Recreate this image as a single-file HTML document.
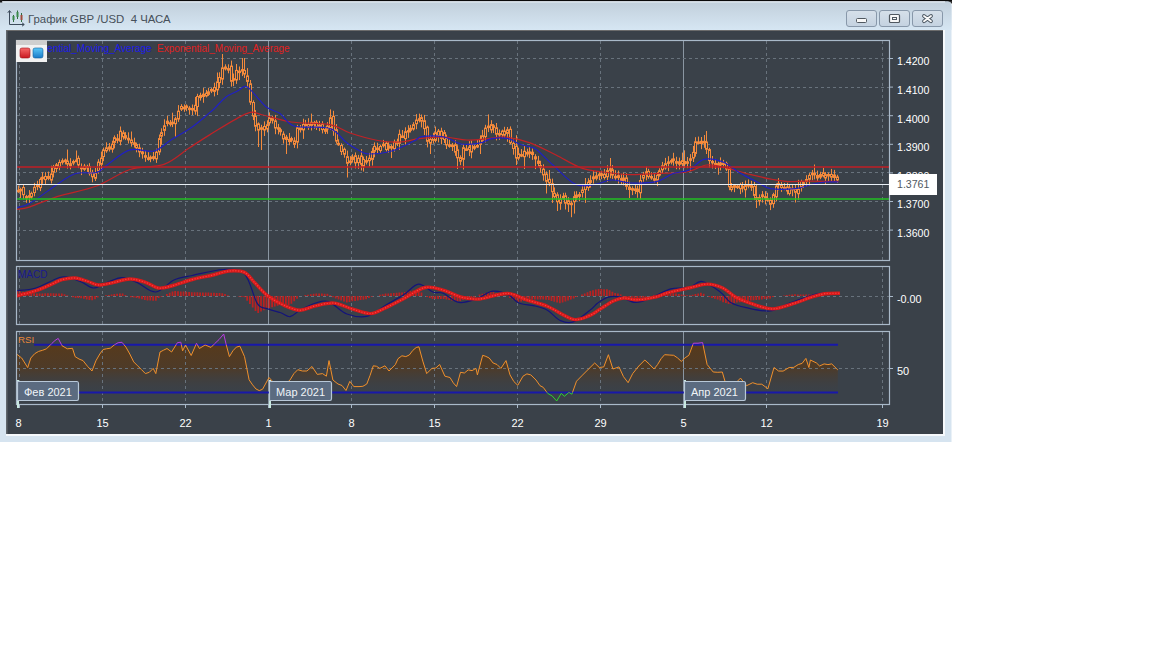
<!DOCTYPE html>
<html><head><meta charset="utf-8"><style>
html,body{margin:0;padding:0;background:#fff;}
body{width:1152px;height:648px;position:relative;overflow:hidden;font-family:"Liberation Sans", sans-serif;}
</style></head><body>
<svg width="1152" height="648" viewBox="0 0 1152 648" style="position:absolute;left:0;top:0;font-family:'Liberation Sans', sans-serif">
<defs>
<linearGradient id="tb" x1="0" y1="0" x2="0" y2="1"><stop offset="0" stop-color="#c0ceda"/><stop offset="1" stop-color="#d6e6f3"/></linearGradient>
<linearGradient id="btn" x1="0" y1="0" x2="0" y2="1"><stop offset="0" stop-color="#d6e0ea"/><stop offset="1" stop-color="#c4d2e0"/></linearGradient>
</defs>
<!-- window frame -->
<path d="M0,0 H946 Q951.5,0 951.5,6 V442 H0 Z" fill="#d6e4f0"/>
<path d="M0,0 H946 Q951.5,0 951.5,6 V30 H0 Z" fill="url(#tb)"/>
<rect x="0" y="0" width="952" height="1.2" fill="#0a0a0a"/>
<path d="M948,1 L952,1 L952,4 Q951,2 948,1 Z" fill="#2a2a2a"/>
<rect x="0" y="0" width="2.5" height="2.5" fill="#1a1a1a"/>
<rect x="2" y="1.4" width="943" height="1" fill="#eef4fa"/>
<rect x="943" y="30" width="2" height="406" fill="#f6f9fc"/>
<rect x="6" y="434" width="939" height="2" fill="#f6f9fc"/>
<rect x="6" y="30" width="937" height="404" fill="#3a4149"/>
<rect x="6" y="30" width="1.5" height="404" fill="#60666c"/>
<rect x="6" y="30" width="937" height="1" fill="#6c6c6c"/>
<!-- title icon -->
<g stroke="#3c4a5a" stroke-width="1" fill="none">
<path d="M9.5,11 V24.5 H24"/>
<path d="M7.8,12.8 L9.5,10.5 L11.2,12.8"/>
<path d="M22,22.8 L24.3,24.5 L22,26.2"/>
</g>
<g stroke="#2e6a3e" stroke-width="1"><path d="M13.5,15 V22 M17.5,10.5 V19 M21.5,13 V22"/></g>
<rect x="12.5" y="16" width="2" height="4" fill="#3a8a4a"/>
<rect x="16.5" y="12" width="2" height="5" fill="#3a8a4a"/>
<rect x="20.5" y="15" width="2" height="5" fill="#a04a3a"/>
<text x="28" y="23" font-size="11.4" fill="#46505a" xml:space="preserve">График GBP /USD  4 ЧАСА</text>
<!-- window buttons -->
<rect x="846.5" y="10.5" width="30" height="16" rx="2.5" fill="url(#btn)" stroke="#8898aa" stroke-width="1"/>
<rect x="879.5" y="10.5" width="30" height="16" rx="2.5" fill="url(#btn)" stroke="#8898aa" stroke-width="1"/>
<rect x="912.5" y="10.5" width="30" height="16" rx="2.5" fill="url(#btn)" stroke="#8898aa" stroke-width="1"/>
<rect x="856.5" y="18.5" width="10" height="4" rx="1" fill="#f8f8f8" stroke="#505860" stroke-width="1"/>
<rect x="889.5" y="14.5" width="10" height="8" rx="1" fill="#f8f8f8" stroke="#505860" stroke-width="1.2"/>
<rect x="892.5" y="17.5" width="4" height="2" fill="none" stroke="#505860" stroke-width="1"/>
<path d="M924,16 L931,21.2 M931,16 L924,21.2" stroke="#4a5560" stroke-width="3.8" stroke-linecap="round"/>
<path d="M924,16 L931,21.2 M931,16 L924,21.2" stroke="#fafafa" stroke-width="1.9" stroke-linecap="round"/>
<line x1="19.5" y1="41" x2="19.5" y2="260" stroke="#68727c" stroke-width="1" stroke-dasharray="3 3"/><line x1="102.5" y1="41" x2="102.5" y2="260" stroke="#68727c" stroke-width="1" stroke-dasharray="3 3"/><line x1="185.5" y1="41" x2="185.5" y2="260" stroke="#68727c" stroke-width="1" stroke-dasharray="3 3"/><line x1="351.5" y1="41" x2="351.5" y2="260" stroke="#68727c" stroke-width="1" stroke-dasharray="3 3"/><line x1="434.5" y1="41" x2="434.5" y2="260" stroke="#68727c" stroke-width="1" stroke-dasharray="3 3"/><line x1="517.5" y1="41" x2="517.5" y2="260" stroke="#68727c" stroke-width="1" stroke-dasharray="3 3"/><line x1="600.5" y1="41" x2="600.5" y2="260" stroke="#68727c" stroke-width="1" stroke-dasharray="3 3"/><line x1="766.5" y1="41" x2="766.5" y2="260" stroke="#68727c" stroke-width="1" stroke-dasharray="3 3"/><line x1="882.5" y1="41" x2="882.5" y2="260" stroke="#68727c" stroke-width="1" stroke-dasharray="3 3"/><line x1="268.5" y1="41" x2="268.5" y2="260" stroke="#8a96a2" stroke-width="1"/><line x1="683.5" y1="41" x2="683.5" y2="260" stroke="#8a96a2" stroke-width="1"/><line x1="17" y1="58.5" x2="889" y2="58.5" stroke="#68727c" stroke-width="1" stroke-dasharray="3 3"/><line x1="17" y1="87.5" x2="889" y2="87.5" stroke="#68727c" stroke-width="1" stroke-dasharray="3 3"/><line x1="17" y1="115.5" x2="889" y2="115.5" stroke="#68727c" stroke-width="1" stroke-dasharray="3 3"/><line x1="17" y1="144.5" x2="889" y2="144.5" stroke="#68727c" stroke-width="1" stroke-dasharray="3 3"/><line x1="17" y1="172.5" x2="889" y2="172.5" stroke="#68727c" stroke-width="1" stroke-dasharray="3 3"/><line x1="17" y1="201.5" x2="889" y2="201.5" stroke="#68727c" stroke-width="1" stroke-dasharray="3 3"/><line x1="17" y1="230.5" x2="889" y2="230.5" stroke="#68727c" stroke-width="1" stroke-dasharray="3 3"/><path d="M18.5,185.5V192.8M20.5,187.7V198.1M23.5,184.9V199.3M26.5,194.9V202.8M29.5,190.1V204.0M31.5,191.6V198.8M34.5,182.9V196.3M37.5,180.8V190.2M40.5,177.4V191.1M42.5,172.3V183.9M45.5,172.1V184.0M48.5,171.6V180.2M51.5,165.7V183.5M53.5,164.9V177.4M56.5,163.0V172.3M59.5,159.6V170.3M62.5,158.4V164.6M65.5,158.6V164.4M67.5,149.5V168.6M70.5,158.2V169.4M73.5,159.7V165.3M76.5,150.5V162.3M78.5,155.6V168.1M81.5,163.5V175.1M84.5,163.9V170.9M87.5,164.7V171.9M89.5,163.2V175.6M92.5,169.8V182.3M95.5,168.0V181.0M98.5,159.2V173.7M101.5,151.6V170.6M103.5,147.6V161.2M106.5,142.3V152.8M109.5,143.0V151.5M112.5,140.7V152.7M114.5,135.4V148.4M117.5,134.1V143.3M120.5,126.5V145.3M123.5,130.3V139.6M125.5,132.1V140.1M128.5,132.3V143.5M131.5,131.5V146.6M134.5,137.7V147.5M136.5,142.6V152.3M139.5,143.7V157.2M142.5,147.8V158.7M145.5,150.7V161.8M148.5,152.2V160.7M150.5,155.4V162.2M153.5,151.9V160.6M156.5,148.7V162.9M159.5,134.5V155.1M161.5,128.3V144.6M164.5,119.3V135.8M167.5,115.8V126.3M170.5,120.0V126.5M172.5,112.7V127.1M175.5,116.8V136.8M178.5,105.1V121.9M181.5,104.2V111.0M184.5,104.4V111.8M186.5,104.4V111.2M189.5,106.1V114.7M192.5,104.5V115.0M195.5,97.0V114.7M197.5,93.8V116.1M200.5,92.7V100.6M203.5,87.9V102.8M206.5,89.9V97.4M208.5,87.8V95.9M211.5,87.9V93.1M214.5,82.7V96.4M217.5,72.5V95.0M219.5,72.3V88.1M222.5,54.0V84.8M225.5,64.3V70.5M228.5,64.3V73.3M231.5,60.6V86.6M233.5,73.5V86.2M236.5,64.0V83.9M239.5,66.5V80.1M242.5,58.0V76.1M244.5,58.0V78.0M247.5,68.1V87.8M250.5,80.0V104.9M253.5,100.3V120.1M255.5,110.1V131.3M258.5,122.4V147.0M261.5,124.8V150.0M264.5,121.4V136.0M267.5,120.3V132.3M269.5,112.4V125.7M272.5,115.7V123.6M275.5,114.9V134.2M278.5,123.9V134.4M280.5,127.7V135.6M283.5,131.3V143.6M286.5,134.9V154.0M289.5,133.0V145.3M291.5,136.7V142.3M294.5,137.3V147.9M297.5,124.9V148.4M300.5,125.0V132.5M303.5,118.7V138.9M305.5,119.9V126.8M308.5,118.2V129.9M311.5,113.6V130.5M314.5,120.9V128.7M316.5,120.2V130.0M319.5,120.9V131.1M322.5,121.2V133.4M325.5,126.8V134.0M327.5,122.1V133.8M330.5,109.4V129.9M333.5,110.8V135.8M336.5,124.1V143.7M338.5,139.3V145.8M341.5,143.3V155.0M344.5,147.5V157.7M347.5,150.6V177.5M350.5,156.2V165.3M352.5,154.2V162.6M355.5,152.4V168.4M358.5,154.9V168.8M361.5,149.2V170.5M363.5,156.6V171.6M366.5,156.0V164.5M369.5,152.9V166.7M372.5,147.7V165.6M374.5,142.4V157.3M377.5,142.7V153.6M380.5,144.6V152.9M383.5,139.9V147.5M386.5,141.3V151.5M388.5,142.2V152.8M391.5,144.5V158.0M394.5,139.6V151.6M397.5,138.7V146.0M399.5,129.6V149.8M402.5,130.0V138.0M405.5,127.3V144.8M408.5,125.2V137.9M410.5,124.9V132.5M413.5,122.2V130.6M416.5,114.1V129.2M419.5,113.6V122.4M421.5,114.5V127.4M424.5,114.9V135.1M427.5,125.6V147.4M430.5,135.6V154.0M433.5,132.8V143.6M435.5,126.5V142.4M438.5,129.0V142.4M441.5,127.7V144.3M444.5,130.0V143.0M446.5,134.6V149.0M449.5,138.8V147.7M452.5,143.0V151.0M455.5,140.3V155.8M457.5,145.2V169.0M460.5,155.3V165.2M463.5,144.0V169.5M466.5,144.8V150.8M469.5,141.2V156.1M471.5,140.5V158.3M474.5,144.8V150.2M477.5,139.9V148.0M480.5,135.3V154.0M482.5,129.9V142.6M485.5,124.8V142.4M488.5,114.4V132.1M491.5,120.2V133.2M493.5,124.1V133.0M496.5,123.0V140.4M499.5,129.5V139.8M502.5,129.6V138.0M504.5,126.8V137.6M507.5,127.0V141.8M510.5,126.4V144.3M513.5,139.7V154.7M516.5,135.2V165.0M518.5,147.6V160.4M521.5,149.0V157.1M524.5,145.9V169.0M527.5,148.7V156.6M529.5,146.7V158.1M532.5,148.5V159.9M535.5,154.2V169.1M538.5,155.9V166.6M540.5,160.8V172.5M543.5,164.3V180.7M546.5,171.4V193.5M549.5,170.0V186.2M552.5,178.6V202.9M554.5,187.4V198.6M557.5,192.3V211.0M560.5,194.3V209.8M563.5,192.8V199.7M565.5,192.7V209.5M568.5,197.2V212.0M571.5,200.6V217.2M574.5,191.4V213.6M576.5,191.2V200.6M579.5,192.0V201.3M582.5,184.5V197.5M585.5,178.0V202.9M588.5,178.2V190.9M590.5,175.3V187.6M593.5,171.2V183.6M596.5,171.4V180.4M599.5,171.2V180.1M601.5,170.7V179.2M604.5,169.1V179.5M607.5,165.3V181.9M610.5,158.0V178.2M612.5,165.1V178.9M615.5,170.2V180.7M618.5,170.6V183.6M621.5,173.8V184.5M623.5,172.7V185.4M626.5,173.3V189.8M629.5,181.7V198.0M632.5,186.3V195.1M635.5,184.8V194.1M637.5,185.6V197.8M640.5,174.1V199.3M643.5,171.9V181.7M646.5,166.7V180.3M648.5,168.8V178.8M651.5,172.2V179.8M654.5,173.1V182.6M657.5,172.1V186.1M659.5,168.3V176.6M662.5,161.9V173.4M665.5,157.9V169.7M668.5,156.2V171.1M671.5,158.6V164.4M673.5,152.8V165.7M676.5,156.8V169.2M679.5,157.6V169.4M682.5,152.6V166.1M684.5,150.3V168.1M687.5,157.0V168.1M690.5,154.1V171.0M693.5,146.0V162.0M695.5,137.2V156.7M698.5,136.6V144.5M701.5,137.0V149.2M704.5,135.0V147.8M706.5,131.0V154.0M709.5,147.8V167.6M712.5,156.0V168.5M715.5,158.9V169.0M718.5,161.7V174.7M720.5,157.4V170.4M723.5,159.9V168.2M726.5,161.7V171.0M729.5,167.1V190.2M731.5,183.0V191.7M734.5,184.1V192.2M737.5,184.0V189.0M740.5,182.8V194.1M742.5,182.0V192.4M745.5,180.5V197.5M748.5,179.5V188.3M751.5,180.9V190.9M754.5,181.8V200.1M756.5,184.4V208.0M759.5,194.4V205.6M762.5,191.1V202.6M765.5,191.2V204.4M767.5,192.8V201.6M770.5,197.4V210.1M773.5,192.8V207.8M776.5,183.4V201.4M778.5,178.1V190.3M781.5,182.1V191.9M784.5,183.0V190.2M787.5,182.7V194.5M789.5,184.4V195.5M792.5,185.0V196.3M795.5,184.6V202.5M798.5,179.8V200.0M801.5,179.7V191.6M803.5,180.9V188.0M806.5,175.2V186.2M809.5,173.1V185.6M812.5,170.0V180.2M814.5,164.5V179.4M817.5,170.6V180.9M820.5,171.8V179.2M823.5,167.9V177.4M825.5,172.1V184.2M828.5,172.5V181.5M831.5,168.9V181.1M834.5,169.9V181.7M837.5,174.8V182.8" stroke="#f48a3c" stroke-width="1" fill="none"/><rect x="17.5" y="190.3" width="2" height="1.5" fill="#f48a3c" stroke="#f48a3c" stroke-width="1"/><rect x="19.5" y="189.3" width="2" height="1.6" fill="#f48a3c" stroke="#f48a3c" stroke-width="1"/><rect x="22.5" y="187.5" width="2" height="7.2" fill="#3a4149" stroke="#f48a3c" stroke-width="1"/><rect x="25.5" y="196.6" width="2" height="1.5" fill="#f48a3c" stroke="#f48a3c" stroke-width="1"/><rect x="28.5" y="195.7" width="2" height="1.5" fill="#f48a3c" stroke="#f48a3c" stroke-width="1"/><rect x="30.5" y="193.4" width="2" height="3.6" fill="#3a4149" stroke="#f48a3c" stroke-width="1"/><rect x="33.5" y="187.3" width="2" height="5.2" fill="#3a4149" stroke="#f48a3c" stroke-width="1"/><rect x="36.5" y="185.1" width="2" height="1.5" fill="#f48a3c" stroke="#f48a3c" stroke-width="1"/><rect x="39.5" y="179.5" width="2" height="8.1" fill="#3a4149" stroke="#f48a3c" stroke-width="1"/><rect x="41.5" y="177.2" width="2" height="1.5" fill="#f48a3c" stroke="#f48a3c" stroke-width="1"/><rect x="44.5" y="176.5" width="2" height="3.1" fill="#3a4149" stroke="#f48a3c" stroke-width="1"/><rect x="47.5" y="176.4" width="2" height="2.0" fill="#f48a3c" stroke="#f48a3c" stroke-width="1"/><rect x="50.5" y="174.0" width="2" height="6.1" fill="#3a4149" stroke="#f48a3c" stroke-width="1"/><rect x="52.5" y="166.7" width="2" height="5.3" fill="#3a4149" stroke="#f48a3c" stroke-width="1"/><rect x="55.5" y="164.9" width="2" height="3.6" fill="#3a4149" stroke="#f48a3c" stroke-width="1"/><rect x="58.5" y="162.5" width="2" height="4.3" fill="#3a4149" stroke="#f48a3c" stroke-width="1"/><rect x="61.5" y="160.8" width="2" height="1.5" fill="#f48a3c" stroke="#f48a3c" stroke-width="1"/><rect x="64.5" y="160.1" width="2" height="1.5" fill="#f48a3c" stroke="#f48a3c" stroke-width="1"/><rect x="66.5" y="161.1" width="2" height="3.0" fill="#3a4149" stroke="#f48a3c" stroke-width="1"/><rect x="69.5" y="163.7" width="2" height="2.2" fill="#f48a3c" stroke="#f48a3c" stroke-width="1"/><rect x="72.5" y="161.5" width="2" height="1.5" fill="#f48a3c" stroke="#f48a3c" stroke-width="1"/><rect x="75.5" y="160.1" width="2" height="1.5" fill="#f48a3c" stroke="#f48a3c" stroke-width="1"/><rect x="77.5" y="158.4" width="2" height="6.5" fill="#3a4149" stroke="#f48a3c" stroke-width="1"/><rect x="80.5" y="167.3" width="2" height="1.5" fill="#f48a3c" stroke="#f48a3c" stroke-width="1"/><rect x="83.5" y="166.2" width="2" height="3.1" fill="#3a4149" stroke="#f48a3c" stroke-width="1"/><rect x="86.5" y="166.4" width="2" height="1.5" fill="#f48a3c" stroke="#f48a3c" stroke-width="1"/><rect x="88.5" y="166.5" width="2" height="6.8" fill="#3a4149" stroke="#f48a3c" stroke-width="1"/><rect x="91.5" y="172.5" width="2" height="4.3" fill="#3a4149" stroke="#f48a3c" stroke-width="1"/><rect x="94.5" y="173.2" width="2" height="5.1" fill="#3a4149" stroke="#f48a3c" stroke-width="1"/><rect x="97.5" y="162.1" width="2" height="8.8" fill="#3a4149" stroke="#f48a3c" stroke-width="1"/><rect x="100.5" y="158.1" width="2" height="6.2" fill="#3a4149" stroke="#f48a3c" stroke-width="1"/><rect x="102.5" y="150.1" width="2" height="6.4" fill="#3a4149" stroke="#f48a3c" stroke-width="1"/><rect x="105.5" y="147.8" width="2" height="3.0" fill="#3a4149" stroke="#f48a3c" stroke-width="1"/><rect x="108.5" y="146.9" width="2" height="2.2" fill="#f48a3c" stroke="#f48a3c" stroke-width="1"/><rect x="111.5" y="144.2" width="2" height="5.0" fill="#3a4149" stroke="#f48a3c" stroke-width="1"/><rect x="113.5" y="137.7" width="2" height="4.7" fill="#3a4149" stroke="#f48a3c" stroke-width="1"/><rect x="116.5" y="138.8" width="2" height="1.5" fill="#f48a3c" stroke="#f48a3c" stroke-width="1"/><rect x="119.5" y="131.2" width="2" height="10.0" fill="#3a4149" stroke="#f48a3c" stroke-width="1"/><rect x="122.5" y="132.8" width="2" height="4.0" fill="#3a4149" stroke="#f48a3c" stroke-width="1"/><rect x="124.5" y="135.7" width="2" height="2.3" fill="#f48a3c" stroke="#f48a3c" stroke-width="1"/><rect x="127.5" y="138.3" width="2" height="1.6" fill="#f48a3c" stroke="#f48a3c" stroke-width="1"/><rect x="130.5" y="140.0" width="2" height="2.9" fill="#3a4149" stroke="#f48a3c" stroke-width="1"/><rect x="133.5" y="142.8" width="2" height="1.5" fill="#f48a3c" stroke="#f48a3c" stroke-width="1"/><rect x="135.5" y="144.6" width="2" height="3.3" fill="#3a4149" stroke="#f48a3c" stroke-width="1"/><rect x="138.5" y="148.0" width="2" height="3.9" fill="#3a4149" stroke="#f48a3c" stroke-width="1"/><rect x="141.5" y="151.9" width="2" height="1.8" fill="#f48a3c" stroke="#f48a3c" stroke-width="1"/><rect x="144.5" y="155.7" width="2" height="1.5" fill="#f48a3c" stroke="#f48a3c" stroke-width="1"/><rect x="147.5" y="157.9" width="2" height="1.5" fill="#f48a3c" stroke="#f48a3c" stroke-width="1"/><rect x="149.5" y="157.2" width="2" height="1.5" fill="#f48a3c" stroke="#f48a3c" stroke-width="1"/><rect x="152.5" y="156.7" width="2" height="1.7" fill="#f48a3c" stroke="#f48a3c" stroke-width="1"/><rect x="155.5" y="152.2" width="2" height="6.7" fill="#3a4149" stroke="#f48a3c" stroke-width="1"/><rect x="158.5" y="138.6" width="2" height="13.3" fill="#3a4149" stroke="#f48a3c" stroke-width="1"/><rect x="160.5" y="132.6" width="2" height="3.6" fill="#3a4149" stroke="#f48a3c" stroke-width="1"/><rect x="163.5" y="125.8" width="2" height="4.6" fill="#3a4149" stroke="#f48a3c" stroke-width="1"/><rect x="166.5" y="121.2" width="2" height="2.3" fill="#f48a3c" stroke="#f48a3c" stroke-width="1"/><rect x="169.5" y="122.8" width="2" height="1.5" fill="#f48a3c" stroke="#f48a3c" stroke-width="1"/><rect x="171.5" y="122.2" width="2" height="1.5" fill="#f48a3c" stroke="#f48a3c" stroke-width="1"/><rect x="174.5" y="118.8" width="2" height="4.9" fill="#3a4149" stroke="#f48a3c" stroke-width="1"/><rect x="177.5" y="111.2" width="2" height="7.8" fill="#3a4149" stroke="#f48a3c" stroke-width="1"/><rect x="180.5" y="106.5" width="2" height="2.7" fill="#3a4149" stroke="#f48a3c" stroke-width="1"/><rect x="183.5" y="107.3" width="2" height="1.5" fill="#f48a3c" stroke="#f48a3c" stroke-width="1"/><rect x="185.5" y="106.0" width="2" height="1.5" fill="#f48a3c" stroke="#f48a3c" stroke-width="1"/><rect x="188.5" y="108.1" width="2" height="1.5" fill="#f48a3c" stroke="#f48a3c" stroke-width="1"/><rect x="191.5" y="108.5" width="2" height="1.5" fill="#f48a3c" stroke="#f48a3c" stroke-width="1"/><rect x="194.5" y="105.3" width="2" height="5.8" fill="#3a4149" stroke="#f48a3c" stroke-width="1"/><rect x="196.5" y="96.5" width="2" height="10.0" fill="#3a4149" stroke="#f48a3c" stroke-width="1"/><rect x="199.5" y="95.4" width="2" height="2.2" fill="#f48a3c" stroke="#f48a3c" stroke-width="1"/><rect x="202.5" y="94.2" width="2" height="2.3" fill="#f48a3c" stroke="#f48a3c" stroke-width="1"/><rect x="205.5" y="93.2" width="2" height="2.7" fill="#3a4149" stroke="#f48a3c" stroke-width="1"/><rect x="207.5" y="91.8" width="2" height="2.6" fill="#3a4149" stroke="#f48a3c" stroke-width="1"/><rect x="210.5" y="89.5" width="2" height="1.5" fill="#f48a3c" stroke="#f48a3c" stroke-width="1"/><rect x="213.5" y="87.5" width="2" height="3.9" fill="#3a4149" stroke="#f48a3c" stroke-width="1"/><rect x="216.5" y="81.9" width="2" height="8.0" fill="#3a4149" stroke="#f48a3c" stroke-width="1"/><rect x="218.5" y="77.5" width="2" height="5.1" fill="#3a4149" stroke="#f48a3c" stroke-width="1"/><rect x="221.5" y="67.9" width="2" height="11.2" fill="#3a4149" stroke="#f48a3c" stroke-width="1"/><rect x="224.5" y="67.0" width="2" height="1.9" fill="#f48a3c" stroke="#f48a3c" stroke-width="1"/><rect x="227.5" y="68.6" width="2" height="1.5" fill="#f48a3c" stroke="#f48a3c" stroke-width="1"/><rect x="230.5" y="66.1" width="2" height="15.2" fill="#3a4149" stroke="#f48a3c" stroke-width="1"/><rect x="232.5" y="78.7" width="2" height="1.5" fill="#f48a3c" stroke="#f48a3c" stroke-width="1"/><rect x="235.5" y="70.4" width="2" height="9.6" fill="#3a4149" stroke="#f48a3c" stroke-width="1"/><rect x="238.5" y="71.1" width="2" height="1.5" fill="#f48a3c" stroke="#f48a3c" stroke-width="1"/><rect x="241.5" y="69.6" width="2" height="1.5" fill="#f48a3c" stroke="#f48a3c" stroke-width="1"/><rect x="243.5" y="70.5" width="2" height="3.5" fill="#3a4149" stroke="#f48a3c" stroke-width="1"/><rect x="246.5" y="75.9" width="2" height="5.5" fill="#3a4149" stroke="#f48a3c" stroke-width="1"/><rect x="249.5" y="83.8" width="2" height="18.3" fill="#3a4149" stroke="#f48a3c" stroke-width="1"/><rect x="252.5" y="102.5" width="2" height="13.5" fill="#3a4149" stroke="#f48a3c" stroke-width="1"/><rect x="254.5" y="116.0" width="2" height="10.2" fill="#3a4149" stroke="#f48a3c" stroke-width="1"/><rect x="257.5" y="123.9" width="2" height="6.2" fill="#3a4149" stroke="#f48a3c" stroke-width="1"/><rect x="260.5" y="127.8" width="2" height="1.5" fill="#f48a3c" stroke="#f48a3c" stroke-width="1"/><rect x="263.5" y="126.5" width="2" height="3.5" fill="#3a4149" stroke="#f48a3c" stroke-width="1"/><rect x="266.5" y="124.8" width="2" height="4.2" fill="#3a4149" stroke="#f48a3c" stroke-width="1"/><rect x="268.5" y="118.1" width="2" height="4.7" fill="#3a4149" stroke="#f48a3c" stroke-width="1"/><rect x="271.5" y="118.2" width="2" height="2.1" fill="#f48a3c" stroke="#f48a3c" stroke-width="1"/><rect x="274.5" y="120.9" width="2" height="7.1" fill="#3a4149" stroke="#f48a3c" stroke-width="1"/><rect x="277.5" y="127.7" width="2" height="1.5" fill="#f48a3c" stroke="#f48a3c" stroke-width="1"/><rect x="279.5" y="129.8" width="2" height="1.9" fill="#f48a3c" stroke="#f48a3c" stroke-width="1"/><rect x="282.5" y="134.1" width="2" height="4.8" fill="#3a4149" stroke="#f48a3c" stroke-width="1"/><rect x="285.5" y="137.2" width="2" height="2.3" fill="#f48a3c" stroke="#f48a3c" stroke-width="1"/><rect x="288.5" y="139.4" width="2" height="2.1" fill="#f48a3c" stroke="#f48a3c" stroke-width="1"/><rect x="290.5" y="138.6" width="2" height="1.5" fill="#f48a3c" stroke="#f48a3c" stroke-width="1"/><rect x="293.5" y="140.9" width="2" height="3.4" fill="#3a4149" stroke="#f48a3c" stroke-width="1"/><rect x="296.5" y="127.8" width="2" height="14.3" fill="#3a4149" stroke="#f48a3c" stroke-width="1"/><rect x="299.5" y="127.6" width="2" height="2.1" fill="#f48a3c" stroke="#f48a3c" stroke-width="1"/><rect x="302.5" y="124.5" width="2" height="5.4" fill="#3a4149" stroke="#f48a3c" stroke-width="1"/><rect x="304.5" y="124.3" width="2" height="1.5" fill="#f48a3c" stroke="#f48a3c" stroke-width="1"/><rect x="307.5" y="124.5" width="2" height="2.6" fill="#3a4149" stroke="#f48a3c" stroke-width="1"/><rect x="310.5" y="122.3" width="2" height="3.1" fill="#3a4149" stroke="#f48a3c" stroke-width="1"/><rect x="313.5" y="122.6" width="2" height="1.5" fill="#f48a3c" stroke="#f48a3c" stroke-width="1"/><rect x="315.5" y="122.3" width="2" height="4.9" fill="#3a4149" stroke="#f48a3c" stroke-width="1"/><rect x="318.5" y="125.1" width="2" height="1.6" fill="#f48a3c" stroke="#f48a3c" stroke-width="1"/><rect x="321.5" y="124.2" width="2" height="5.4" fill="#3a4149" stroke="#f48a3c" stroke-width="1"/><rect x="324.5" y="129.5" width="2" height="1.8" fill="#f48a3c" stroke="#f48a3c" stroke-width="1"/><rect x="326.5" y="126.1" width="2" height="2.8" fill="#3a4149" stroke="#f48a3c" stroke-width="1"/><rect x="329.5" y="117.8" width="2" height="10.4" fill="#3a4149" stroke="#f48a3c" stroke-width="1"/><rect x="332.5" y="116.3" width="2" height="14.3" fill="#3a4149" stroke="#f48a3c" stroke-width="1"/><rect x="335.5" y="129.7" width="2" height="11.4" fill="#3a4149" stroke="#f48a3c" stroke-width="1"/><rect x="337.5" y="143.3" width="2" height="1.5" fill="#f48a3c" stroke="#f48a3c" stroke-width="1"/><rect x="340.5" y="145.5" width="2" height="6.0" fill="#3a4149" stroke="#f48a3c" stroke-width="1"/><rect x="343.5" y="149.3" width="2" height="4.9" fill="#3a4149" stroke="#f48a3c" stroke-width="1"/><rect x="346.5" y="156.7" width="2" height="6.6" fill="#3a4149" stroke="#f48a3c" stroke-width="1"/><rect x="349.5" y="161.0" width="2" height="1.5" fill="#f48a3c" stroke="#f48a3c" stroke-width="1"/><rect x="351.5" y="157.1" width="2" height="2.3" fill="#f48a3c" stroke="#f48a3c" stroke-width="1"/><rect x="354.5" y="155.7" width="2" height="7.2" fill="#3a4149" stroke="#f48a3c" stroke-width="1"/><rect x="357.5" y="158.2" width="2" height="4.4" fill="#3a4149" stroke="#f48a3c" stroke-width="1"/><rect x="360.5" y="155.9" width="2" height="8.4" fill="#3a4149" stroke="#f48a3c" stroke-width="1"/><rect x="362.5" y="159.4" width="2" height="7.0" fill="#3a4149" stroke="#f48a3c" stroke-width="1"/><rect x="365.5" y="160.6" width="2" height="1.5" fill="#f48a3c" stroke="#f48a3c" stroke-width="1"/><rect x="368.5" y="158.2" width="2" height="2.5" fill="#3a4149" stroke="#f48a3c" stroke-width="1"/><rect x="371.5" y="151.6" width="2" height="7.8" fill="#3a4149" stroke="#f48a3c" stroke-width="1"/><rect x="373.5" y="146.4" width="2" height="4.8" fill="#3a4149" stroke="#f48a3c" stroke-width="1"/><rect x="376.5" y="148.0" width="2" height="1.5" fill="#f48a3c" stroke="#f48a3c" stroke-width="1"/><rect x="379.5" y="146.5" width="2" height="4.0" fill="#3a4149" stroke="#f48a3c" stroke-width="1"/><rect x="382.5" y="144.2" width="2" height="1.5" fill="#f48a3c" stroke="#f48a3c" stroke-width="1"/><rect x="385.5" y="143.2" width="2" height="6.3" fill="#3a4149" stroke="#f48a3c" stroke-width="1"/><rect x="387.5" y="145.8" width="2" height="2.4" fill="#f48a3c" stroke="#f48a3c" stroke-width="1"/><rect x="390.5" y="146.6" width="2" height="1.5" fill="#f48a3c" stroke="#f48a3c" stroke-width="1"/><rect x="393.5" y="142.1" width="2" height="6.7" fill="#3a4149" stroke="#f48a3c" stroke-width="1"/><rect x="396.5" y="141.8" width="2" height="1.5" fill="#f48a3c" stroke="#f48a3c" stroke-width="1"/><rect x="398.5" y="134.3" width="2" height="9.0" fill="#3a4149" stroke="#f48a3c" stroke-width="1"/><rect x="401.5" y="136.0" width="2" height="1.5" fill="#f48a3c" stroke="#f48a3c" stroke-width="1"/><rect x="404.5" y="131.7" width="2" height="6.9" fill="#3a4149" stroke="#f48a3c" stroke-width="1"/><rect x="407.5" y="130.5" width="2" height="1.5" fill="#f48a3c" stroke="#f48a3c" stroke-width="1"/><rect x="409.5" y="128.3" width="2" height="2.0" fill="#f48a3c" stroke="#f48a3c" stroke-width="1"/><rect x="412.5" y="124.7" width="2" height="4.3" fill="#3a4149" stroke="#f48a3c" stroke-width="1"/><rect x="415.5" y="120.1" width="2" height="3.6" fill="#3a4149" stroke="#f48a3c" stroke-width="1"/><rect x="418.5" y="118.7" width="2" height="1.7" fill="#f48a3c" stroke="#f48a3c" stroke-width="1"/><rect x="420.5" y="117.6" width="2" height="3.6" fill="#3a4149" stroke="#f48a3c" stroke-width="1"/><rect x="423.5" y="120.7" width="2" height="7.9" fill="#3a4149" stroke="#f48a3c" stroke-width="1"/><rect x="426.5" y="127.1" width="2" height="14.2" fill="#3a4149" stroke="#f48a3c" stroke-width="1"/><rect x="429.5" y="139.4" width="2" height="3.8" fill="#3a4149" stroke="#f48a3c" stroke-width="1"/><rect x="432.5" y="137.4" width="2" height="2.9" fill="#3a4149" stroke="#f48a3c" stroke-width="1"/><rect x="434.5" y="132.7" width="2" height="7.7" fill="#3a4149" stroke="#f48a3c" stroke-width="1"/><rect x="437.5" y="131.1" width="2" height="5.0" fill="#3a4149" stroke="#f48a3c" stroke-width="1"/><rect x="440.5" y="131.2" width="2" height="7.1" fill="#3a4149" stroke="#f48a3c" stroke-width="1"/><rect x="443.5" y="132.6" width="2" height="6.9" fill="#3a4149" stroke="#f48a3c" stroke-width="1"/><rect x="445.5" y="138.1" width="2" height="6.8" fill="#3a4149" stroke="#f48a3c" stroke-width="1"/><rect x="448.5" y="144.8" width="2" height="1.5" fill="#f48a3c" stroke="#f48a3c" stroke-width="1"/><rect x="451.5" y="145.1" width="2" height="1.5" fill="#f48a3c" stroke="#f48a3c" stroke-width="1"/><rect x="454.5" y="144.7" width="2" height="7.5" fill="#3a4149" stroke="#f48a3c" stroke-width="1"/><rect x="456.5" y="149.8" width="2" height="8.0" fill="#3a4149" stroke="#f48a3c" stroke-width="1"/><rect x="459.5" y="157.6" width="2" height="3.6" fill="#3a4149" stroke="#f48a3c" stroke-width="1"/><rect x="462.5" y="147.7" width="2" height="11.6" fill="#3a4149" stroke="#f48a3c" stroke-width="1"/><rect x="465.5" y="148.9" width="2" height="1.5" fill="#f48a3c" stroke="#f48a3c" stroke-width="1"/><rect x="468.5" y="147.0" width="2" height="2.6" fill="#3a4149" stroke="#f48a3c" stroke-width="1"/><rect x="470.5" y="144.5" width="2" height="7.5" fill="#3a4149" stroke="#f48a3c" stroke-width="1"/><rect x="473.5" y="146.7" width="2" height="1.5" fill="#f48a3c" stroke="#f48a3c" stroke-width="1"/><rect x="476.5" y="145.5" width="2" height="1.5" fill="#f48a3c" stroke="#f48a3c" stroke-width="1"/><rect x="479.5" y="139.3" width="2" height="5.0" fill="#3a4149" stroke="#f48a3c" stroke-width="1"/><rect x="481.5" y="135.8" width="2" height="4.4" fill="#3a4149" stroke="#f48a3c" stroke-width="1"/><rect x="484.5" y="128.1" width="2" height="8.5" fill="#3a4149" stroke="#f48a3c" stroke-width="1"/><rect x="487.5" y="126.1" width="2" height="1.5" fill="#f48a3c" stroke="#f48a3c" stroke-width="1"/><rect x="490.5" y="124.6" width="2" height="5.3" fill="#3a4149" stroke="#f48a3c" stroke-width="1"/><rect x="492.5" y="125.8" width="2" height="1.6" fill="#f48a3c" stroke="#f48a3c" stroke-width="1"/><rect x="495.5" y="127.8" width="2" height="6.4" fill="#3a4149" stroke="#f48a3c" stroke-width="1"/><rect x="498.5" y="133.5" width="2" height="1.5" fill="#f48a3c" stroke="#f48a3c" stroke-width="1"/><rect x="501.5" y="131.1" width="2" height="3.5" fill="#3a4149" stroke="#f48a3c" stroke-width="1"/><rect x="503.5" y="131.2" width="2" height="3.9" fill="#3a4149" stroke="#f48a3c" stroke-width="1"/><rect x="506.5" y="129.8" width="2" height="3.6" fill="#3a4149" stroke="#f48a3c" stroke-width="1"/><rect x="509.5" y="129.3" width="2" height="13.5" fill="#3a4149" stroke="#f48a3c" stroke-width="1"/><rect x="512.5" y="143.4" width="2" height="5.1" fill="#3a4149" stroke="#f48a3c" stroke-width="1"/><rect x="515.5" y="146.3" width="2" height="11.7" fill="#3a4149" stroke="#f48a3c" stroke-width="1"/><rect x="517.5" y="153.8" width="2" height="4.3" fill="#3a4149" stroke="#f48a3c" stroke-width="1"/><rect x="520.5" y="154.6" width="2" height="1.5" fill="#f48a3c" stroke="#f48a3c" stroke-width="1"/><rect x="523.5" y="151.3" width="2" height="5.4" fill="#3a4149" stroke="#f48a3c" stroke-width="1"/><rect x="526.5" y="152.5" width="2" height="1.5" fill="#f48a3c" stroke="#f48a3c" stroke-width="1"/><rect x="528.5" y="151.9" width="2" height="1.5" fill="#f48a3c" stroke="#f48a3c" stroke-width="1"/><rect x="531.5" y="152.2" width="2" height="2.3" fill="#f48a3c" stroke="#f48a3c" stroke-width="1"/><rect x="534.5" y="156.8" width="2" height="2.1" fill="#f48a3c" stroke="#f48a3c" stroke-width="1"/><rect x="537.5" y="161.1" width="2" height="2.3" fill="#f48a3c" stroke="#f48a3c" stroke-width="1"/><rect x="539.5" y="165.5" width="2" height="2.1" fill="#f48a3c" stroke="#f48a3c" stroke-width="1"/><rect x="542.5" y="169.2" width="2" height="5.7" fill="#3a4149" stroke="#f48a3c" stroke-width="1"/><rect x="545.5" y="174.0" width="2" height="7.3" fill="#3a4149" stroke="#f48a3c" stroke-width="1"/><rect x="548.5" y="179.3" width="2" height="3.6" fill="#3a4149" stroke="#f48a3c" stroke-width="1"/><rect x="551.5" y="183.6" width="2" height="8.1" fill="#3a4149" stroke="#f48a3c" stroke-width="1"/><rect x="553.5" y="193.3" width="2" height="3.4" fill="#3a4149" stroke="#f48a3c" stroke-width="1"/><rect x="556.5" y="194.8" width="2" height="6.9" fill="#3a4149" stroke="#f48a3c" stroke-width="1"/><rect x="559.5" y="199.0" width="2" height="4.3" fill="#3a4149" stroke="#f48a3c" stroke-width="1"/><rect x="562.5" y="196.4" width="2" height="1.7" fill="#f48a3c" stroke="#f48a3c" stroke-width="1"/><rect x="564.5" y="195.8" width="2" height="7.4" fill="#3a4149" stroke="#f48a3c" stroke-width="1"/><rect x="567.5" y="200.8" width="2" height="3.3" fill="#3a4149" stroke="#f48a3c" stroke-width="1"/><rect x="570.5" y="203.2" width="2" height="1.5" fill="#f48a3c" stroke="#f48a3c" stroke-width="1"/><rect x="573.5" y="196.7" width="2" height="5.0" fill="#3a4149" stroke="#f48a3c" stroke-width="1"/><rect x="575.5" y="195.1" width="2" height="2.2" fill="#f48a3c" stroke="#f48a3c" stroke-width="1"/><rect x="578.5" y="194.6" width="2" height="1.7" fill="#f48a3c" stroke="#f48a3c" stroke-width="1"/><rect x="581.5" y="190.0" width="2" height="2.5" fill="#3a4149" stroke="#f48a3c" stroke-width="1"/><rect x="584.5" y="185.5" width="2" height="4.0" fill="#3a4149" stroke="#f48a3c" stroke-width="1"/><rect x="587.5" y="182.2" width="2" height="5.3" fill="#3a4149" stroke="#f48a3c" stroke-width="1"/><rect x="589.5" y="180.6" width="2" height="1.8" fill="#f48a3c" stroke="#f48a3c" stroke-width="1"/><rect x="592.5" y="176.9" width="2" height="1.9" fill="#f48a3c" stroke="#f48a3c" stroke-width="1"/><rect x="595.5" y="175.8" width="2" height="2.5" fill="#3a4149" stroke="#f48a3c" stroke-width="1"/><rect x="598.5" y="174.2" width="2" height="1.5" fill="#f48a3c" stroke="#f48a3c" stroke-width="1"/><rect x="600.5" y="173.8" width="2" height="1.5" fill="#f48a3c" stroke="#f48a3c" stroke-width="1"/><rect x="603.5" y="174.3" width="2" height="3.2" fill="#3a4149" stroke="#f48a3c" stroke-width="1"/><rect x="606.5" y="170.7" width="2" height="6.0" fill="#3a4149" stroke="#f48a3c" stroke-width="1"/><rect x="609.5" y="168.8" width="2" height="1.5" fill="#f48a3c" stroke="#f48a3c" stroke-width="1"/><rect x="611.5" y="169.8" width="2" height="5.3" fill="#3a4149" stroke="#f48a3c" stroke-width="1"/><rect x="614.5" y="176.3" width="2" height="1.5" fill="#f48a3c" stroke="#f48a3c" stroke-width="1"/><rect x="617.5" y="175.7" width="2" height="1.9" fill="#f48a3c" stroke="#f48a3c" stroke-width="1"/><rect x="620.5" y="178.6" width="2" height="2.2" fill="#f48a3c" stroke="#f48a3c" stroke-width="1"/><rect x="622.5" y="178.1" width="2" height="2.2" fill="#f48a3c" stroke="#f48a3c" stroke-width="1"/><rect x="625.5" y="177.9" width="2" height="8.4" fill="#3a4149" stroke="#f48a3c" stroke-width="1"/><rect x="628.5" y="187.1" width="2" height="2.4" fill="#f48a3c" stroke="#f48a3c" stroke-width="1"/><rect x="631.5" y="188.6" width="2" height="1.5" fill="#f48a3c" stroke="#f48a3c" stroke-width="1"/><rect x="634.5" y="189.0" width="2" height="1.5" fill="#f48a3c" stroke="#f48a3c" stroke-width="1"/><rect x="636.5" y="189.1" width="2" height="2.4" fill="#f48a3c" stroke="#f48a3c" stroke-width="1"/><rect x="639.5" y="180.5" width="2" height="12.3" fill="#3a4149" stroke="#f48a3c" stroke-width="1"/><rect x="642.5" y="175.5" width="2" height="2.6" fill="#3a4149" stroke="#f48a3c" stroke-width="1"/><rect x="645.5" y="171.9" width="2" height="2.2" fill="#f48a3c" stroke="#f48a3c" stroke-width="1"/><rect x="647.5" y="171.4" width="2" height="5.3" fill="#3a4149" stroke="#f48a3c" stroke-width="1"/><rect x="650.5" y="176.5" width="2" height="1.5" fill="#f48a3c" stroke="#f48a3c" stroke-width="1"/><rect x="653.5" y="178.7" width="2" height="1.5" fill="#f48a3c" stroke="#f48a3c" stroke-width="1"/><rect x="656.5" y="175.4" width="2" height="4.9" fill="#3a4149" stroke="#f48a3c" stroke-width="1"/><rect x="658.5" y="170.8" width="2" height="4.3" fill="#3a4149" stroke="#f48a3c" stroke-width="1"/><rect x="661.5" y="165.8" width="2" height="4.0" fill="#3a4149" stroke="#f48a3c" stroke-width="1"/><rect x="664.5" y="163.7" width="2" height="4.2" fill="#3a4149" stroke="#f48a3c" stroke-width="1"/><rect x="667.5" y="161.9" width="2" height="1.5" fill="#f48a3c" stroke="#f48a3c" stroke-width="1"/><rect x="670.5" y="160.6" width="2" height="1.5" fill="#f48a3c" stroke="#f48a3c" stroke-width="1"/><rect x="672.5" y="158.9" width="2" height="1.5" fill="#f48a3c" stroke="#f48a3c" stroke-width="1"/><rect x="675.5" y="161.6" width="2" height="1.6" fill="#f48a3c" stroke="#f48a3c" stroke-width="1"/><rect x="678.5" y="161.8" width="2" height="2.4" fill="#f48a3c" stroke="#f48a3c" stroke-width="1"/><rect x="681.5" y="160.6" width="2" height="3.3" fill="#3a4149" stroke="#f48a3c" stroke-width="1"/><rect x="683.5" y="161.5" width="2" height="2.4" fill="#f48a3c" stroke="#f48a3c" stroke-width="1"/><rect x="686.5" y="161.8" width="2" height="1.5" fill="#f48a3c" stroke="#f48a3c" stroke-width="1"/><rect x="689.5" y="158.8" width="2" height="1.5" fill="#f48a3c" stroke="#f48a3c" stroke-width="1"/><rect x="692.5" y="152.4" width="2" height="5.6" fill="#3a4149" stroke="#f48a3c" stroke-width="1"/><rect x="694.5" y="141.8" width="2" height="11.6" fill="#3a4149" stroke="#f48a3c" stroke-width="1"/><rect x="697.5" y="141.9" width="2" height="1.5" fill="#f48a3c" stroke="#f48a3c" stroke-width="1"/><rect x="700.5" y="141.3" width="2" height="2.2" fill="#f48a3c" stroke="#f48a3c" stroke-width="1"/><rect x="703.5" y="141.4" width="2" height="1.6" fill="#f48a3c" stroke="#f48a3c" stroke-width="1"/><rect x="705.5" y="142.0" width="2" height="7.3" fill="#3a4149" stroke="#f48a3c" stroke-width="1"/><rect x="708.5" y="149.6" width="2" height="11.0" fill="#3a4149" stroke="#f48a3c" stroke-width="1"/><rect x="711.5" y="161.4" width="2" height="1.5" fill="#f48a3c" stroke="#f48a3c" stroke-width="1"/><rect x="714.5" y="163.4" width="2" height="1.5" fill="#f48a3c" stroke="#f48a3c" stroke-width="1"/><rect x="717.5" y="163.7" width="2" height="1.8" fill="#f48a3c" stroke="#f48a3c" stroke-width="1"/><rect x="719.5" y="163.0" width="2" height="1.9" fill="#f48a3c" stroke="#f48a3c" stroke-width="1"/><rect x="722.5" y="163.0" width="2" height="1.5" fill="#f48a3c" stroke="#f48a3c" stroke-width="1"/><rect x="725.5" y="163.4" width="2" height="5.6" fill="#3a4149" stroke="#f48a3c" stroke-width="1"/><rect x="728.5" y="168.7" width="2" height="18.1" fill="#3a4149" stroke="#f48a3c" stroke-width="1"/><rect x="730.5" y="186.6" width="2" height="3.0" fill="#3a4149" stroke="#f48a3c" stroke-width="1"/><rect x="733.5" y="185.6" width="2" height="1.7" fill="#f48a3c" stroke="#f48a3c" stroke-width="1"/><rect x="736.5" y="186.1" width="2" height="1.5" fill="#f48a3c" stroke="#f48a3c" stroke-width="1"/><rect x="739.5" y="184.5" width="2" height="4.2" fill="#3a4149" stroke="#f48a3c" stroke-width="1"/><rect x="741.5" y="186.6" width="2" height="1.5" fill="#f48a3c" stroke="#f48a3c" stroke-width="1"/><rect x="744.5" y="185.6" width="2" height="4.1" fill="#3a4149" stroke="#f48a3c" stroke-width="1"/><rect x="747.5" y="184.6" width="2" height="1.5" fill="#f48a3c" stroke="#f48a3c" stroke-width="1"/><rect x="750.5" y="185.3" width="2" height="2.0" fill="#f48a3c" stroke="#f48a3c" stroke-width="1"/><rect x="753.5" y="186.5" width="2" height="8.9" fill="#3a4149" stroke="#f48a3c" stroke-width="1"/><rect x="755.5" y="197.7" width="2" height="1.7" fill="#f48a3c" stroke="#f48a3c" stroke-width="1"/><rect x="758.5" y="197.6" width="2" height="3.4" fill="#3a4149" stroke="#f48a3c" stroke-width="1"/><rect x="761.5" y="194.8" width="2" height="1.9" fill="#f48a3c" stroke="#f48a3c" stroke-width="1"/><rect x="764.5" y="196.7" width="2" height="1.5" fill="#f48a3c" stroke="#f48a3c" stroke-width="1"/><rect x="766.5" y="198.8" width="2" height="1.5" fill="#f48a3c" stroke="#f48a3c" stroke-width="1"/><rect x="769.5" y="200.2" width="2" height="4.1" fill="#3a4149" stroke="#f48a3c" stroke-width="1"/><rect x="772.5" y="194.7" width="2" height="8.9" fill="#3a4149" stroke="#f48a3c" stroke-width="1"/><rect x="775.5" y="186.1" width="2" height="10.7" fill="#3a4149" stroke="#f48a3c" stroke-width="1"/><rect x="777.5" y="183.4" width="2" height="1.5" fill="#f48a3c" stroke="#f48a3c" stroke-width="1"/><rect x="780.5" y="184.7" width="2" height="2.8" fill="#3a4149" stroke="#f48a3c" stroke-width="1"/><rect x="783.5" y="187.4" width="2" height="1.5" fill="#f48a3c" stroke="#f48a3c" stroke-width="1"/><rect x="786.5" y="187.0" width="2" height="4.0" fill="#3a4149" stroke="#f48a3c" stroke-width="1"/><rect x="788.5" y="187.8" width="2" height="5.7" fill="#3a4149" stroke="#f48a3c" stroke-width="1"/><rect x="791.5" y="188.3" width="2" height="1.5" fill="#f48a3c" stroke="#f48a3c" stroke-width="1"/><rect x="794.5" y="188.9" width="2" height="3.4" fill="#3a4149" stroke="#f48a3c" stroke-width="1"/><rect x="797.5" y="189.4" width="2" height="4.3" fill="#3a4149" stroke="#f48a3c" stroke-width="1"/><rect x="800.5" y="181.5" width="2" height="5.9" fill="#3a4149" stroke="#f48a3c" stroke-width="1"/><rect x="802.5" y="182.7" width="2" height="1.5" fill="#f48a3c" stroke="#f48a3c" stroke-width="1"/><rect x="805.5" y="179.5" width="2" height="2.0" fill="#f48a3c" stroke="#f48a3c" stroke-width="1"/><rect x="808.5" y="175.4" width="2" height="3.9" fill="#3a4149" stroke="#f48a3c" stroke-width="1"/><rect x="811.5" y="173.2" width="2" height="1.5" fill="#f48a3c" stroke="#f48a3c" stroke-width="1"/><rect x="813.5" y="173.3" width="2" height="1.5" fill="#f48a3c" stroke="#f48a3c" stroke-width="1"/><rect x="816.5" y="175.5" width="2" height="2.5" fill="#f48a3c" stroke="#f48a3c" stroke-width="1"/><rect x="819.5" y="174.6" width="2" height="2.5" fill="#f48a3c" stroke="#f48a3c" stroke-width="1"/><rect x="822.5" y="172.8" width="2" height="3.1" fill="#3a4149" stroke="#f48a3c" stroke-width="1"/><rect x="824.5" y="174.7" width="2" height="3.3" fill="#3a4149" stroke="#f48a3c" stroke-width="1"/><rect x="827.5" y="174.5" width="2" height="1.5" fill="#f48a3c" stroke="#f48a3c" stroke-width="1"/><rect x="830.5" y="174.5" width="2" height="2.7" fill="#3a4149" stroke="#f48a3c" stroke-width="1"/><rect x="833.5" y="175.0" width="2" height="2.5" fill="#f48a3c" stroke="#f48a3c" stroke-width="1"/><rect x="836.5" y="177.0" width="2" height="2.9" fill="#3a4149" stroke="#f48a3c" stroke-width="1"/><path d="M17.0,209.5 C19.2,209.1 23.2,209.0 30.0,206.8 C36.8,204.6 46.7,199.9 57.8,196.4 C68.9,192.9 84.7,190.5 96.7,186.0 C108.7,181.5 118.8,173.1 130.0,169.5 C141.2,165.9 154.3,167.8 164.0,164.3 C173.7,160.9 180.3,153.8 188.0,148.8 C195.7,143.9 200.2,140.5 210.0,134.6 C219.8,128.7 237.9,116.9 246.7,113.6 C255.5,110.3 255.6,113.6 263.0,115.0 C270.4,116.4 279.8,120.4 291.0,122.0 C302.2,123.6 320.2,122.9 330.0,124.7 C339.8,126.5 342.0,130.4 350.0,133.0 C358.0,135.6 369.5,139.0 377.8,140.5 C386.1,142.0 393.1,142.3 400.0,142.0 C406.9,141.7 412.0,139.4 419.4,138.6 C426.8,137.8 436.5,136.8 444.4,137.0 C452.3,137.2 459.3,139.7 466.7,140.0 C474.1,140.3 482.5,139.1 489.0,138.6 C495.5,138.1 498.8,136.3 505.6,137.0 C512.4,137.7 521.6,139.8 530.0,142.8 C538.4,145.8 547.5,150.8 556.0,155.0 C564.5,159.2 573.1,165.0 581.0,167.8 C588.9,170.6 595.0,170.8 603.3,172.0 C611.6,173.2 621.7,174.5 631.0,174.7 C640.3,174.9 649.7,173.8 659.0,173.3 C668.3,172.9 678.8,173.4 686.7,172.0 C694.7,170.6 700.2,165.7 706.7,165.0 C713.2,164.3 718.6,166.2 726.0,167.8 C733.4,169.4 743.2,172.8 751.0,174.7 C758.8,176.6 766.8,178.3 773.0,179.5 C779.2,180.7 782.1,181.3 788.0,181.6 C793.9,181.8 800.1,181.0 808.5,181.0 C816.9,181.0 833.6,181.4 838.6,181.5" stroke="#c02226" stroke-width="1.25" fill="none"/><path d="M17.0,207.5 C19.2,206.8 23.2,207.2 30.0,203.3 C36.8,199.4 50.2,188.9 57.8,183.9 C65.4,178.9 69.3,175.4 75.8,173.5 C82.3,171.6 91.4,174.0 96.7,172.5 C102.0,171.0 102.2,168.2 107.8,164.4 C113.3,160.6 122.3,152.1 130.0,149.9 C137.7,147.7 147.2,152.7 154.0,151.0 C160.8,149.3 164.7,144.0 171.0,140.0 C177.3,136.0 185.3,131.8 191.8,127.2 C198.3,122.6 206.1,115.6 210.0,112.4 C213.9,109.2 212.3,110.6 215.0,108.0 C217.7,105.4 222.3,99.8 226.0,97.0 C229.7,94.2 234.0,93.0 237.0,91.3 C240.0,89.6 241.9,87.2 244.0,86.7 C246.1,86.2 245.7,85.3 249.4,88.6 C253.1,91.9 260.9,102.5 266.0,106.7 C271.1,110.9 275.3,110.4 280.0,113.6 C284.7,116.8 286.6,123.7 294.0,126.0 C301.4,128.3 317.5,126.5 324.4,127.5 C331.3,128.4 331.8,129.1 335.5,131.7 C339.2,134.2 342.6,139.6 346.7,142.8 C350.8,146.0 356.2,149.1 360.0,151.0 C363.8,152.9 364.1,154.0 369.4,154.0 C374.7,154.0 384.3,153.2 391.7,151.0 C399.1,148.8 408.9,143.4 414.0,141.0 C419.1,138.6 417.0,137.4 422.0,136.7 C427.0,136.0 437.5,135.8 444.0,137.0 C450.5,138.2 454.9,143.0 461.0,144.0 C467.1,145.0 475.4,143.7 480.5,142.8 C485.6,141.9 487.1,139.3 491.7,138.6 C496.3,137.9 503.4,137.7 508.0,138.6 C512.6,139.5 515.7,142.6 519.4,144.0 C523.1,145.4 527.1,146.1 530.0,147.0 C532.9,147.9 532.9,146.7 536.7,149.7 C540.5,152.7 546.5,159.2 553.0,165.0 C559.5,170.8 568.6,181.2 575.6,184.4 C582.6,187.6 589.0,185.1 595.0,184.4 C601.0,183.7 605.7,180.2 611.7,180.0 C617.7,179.8 623.6,182.7 631.0,183.0 C638.4,183.3 649.0,183.3 656.0,181.7 C663.0,180.1 667.8,175.4 673.3,173.5 C678.8,171.6 683.9,172.3 689.0,170.0 C694.1,167.7 698.3,160.7 704.0,159.4 C709.7,158.1 717.0,159.7 723.0,162.0 C729.0,164.3 734.4,169.7 740.0,173.0 C745.6,176.3 751.6,179.1 756.7,181.7 C761.8,184.3 764.0,187.4 770.5,188.6 C777.0,189.8 788.7,189.3 795.6,188.6 C802.5,187.9 806.9,185.5 812.0,184.4 C817.1,183.3 821.6,182.4 826.0,182.0 C830.4,181.6 836.5,182.0 838.6,182.0" stroke="#2020c4" stroke-width="1.2" fill="none"/><line x1="17" y1="167" x2="889" y2="167" stroke="#c01e24" stroke-width="1.6"/><line x1="17" y1="184.5" x2="889" y2="184.5" stroke="#e8eef4" stroke-width="1.2"/><line x1="17" y1="199" x2="889" y2="199" stroke="#22c022" stroke-width="1.7"/><rect x="16.5" y="40.5" width="873" height="220" fill="none" stroke="#a9b9c9" stroke-width="1.2"/><line x1="889" y1="58.5" x2="893" y2="58.5" stroke="#a9b9c9" stroke-width="1"/><text x="897" y="65.3" font-size="10.6" fill="#ffffff">1.4200</text><line x1="889" y1="87.1" x2="893" y2="87.1" stroke="#a9b9c9" stroke-width="1"/><text x="897" y="93.9" font-size="10.6" fill="#ffffff">1.4100</text><line x1="889" y1="115.7" x2="893" y2="115.7" stroke="#a9b9c9" stroke-width="1"/><text x="897" y="122.5" font-size="10.6" fill="#ffffff">1.4000</text><line x1="889" y1="144.3" x2="893" y2="144.3" stroke="#a9b9c9" stroke-width="1"/><text x="897" y="151.1" font-size="10.6" fill="#ffffff">1.3900</text><line x1="889" y1="172.9" x2="893" y2="172.9" stroke="#a9b9c9" stroke-width="1"/><text x="897" y="179.7" font-size="10.6" fill="#ffffff">1.3800</text><line x1="889" y1="201.5" x2="893" y2="201.5" stroke="#a9b9c9" stroke-width="1"/><text x="897" y="208.3" font-size="10.6" fill="#ffffff">1.3700</text><line x1="889" y1="230.1" x2="893" y2="230.1" stroke="#a9b9c9" stroke-width="1"/><text x="897" y="236.9" font-size="10.6" fill="#ffffff">1.3600</text><rect x="889" y="174" width="48" height="21" fill="#ffffff"/><text x="897" y="188.2" font-size="10.6" fill="#505860">1.3761</text><text x="19" y="51.5" font-size="10" fill="#1a1ae8">Exponential_Moving_Average</text><text x="157" y="51.5" font-size="10" fill="#e02020">Exponential_Moving_Average</text><rect x="16" y="40" width="31" height="22" fill="#f2f2f2"/><rect x="16" y="40" width="31" height="5" fill="#cfcfcf"/><defs><linearGradient id="gr" x1="0" y1="0" x2="0" y2="1"><stop offset="0" stop-color="#f86a6a"/><stop offset="1" stop-color="#c81820"/></linearGradient><linearGradient id="gb" x1="0" y1="0" x2="0" y2="1"><stop offset="0" stop-color="#5ac8f8"/><stop offset="1" stop-color="#1a7ac8"/></linearGradient></defs><rect x="20" y="48" width="10" height="10" rx="2" fill="url(#gr)" stroke="#a01018" stroke-width="0.6"/><rect x="33" y="48" width="10" height="10" rx="2" fill="url(#gb)" stroke="#10609a" stroke-width="0.6"/><line x1="19.5" y1="267" x2="19.5" y2="324" stroke="#68727c" stroke-width="1" stroke-dasharray="3 3"/><line x1="102.5" y1="267" x2="102.5" y2="324" stroke="#68727c" stroke-width="1" stroke-dasharray="3 3"/><line x1="185.5" y1="267" x2="185.5" y2="324" stroke="#68727c" stroke-width="1" stroke-dasharray="3 3"/><line x1="351.5" y1="267" x2="351.5" y2="324" stroke="#68727c" stroke-width="1" stroke-dasharray="3 3"/><line x1="434.5" y1="267" x2="434.5" y2="324" stroke="#68727c" stroke-width="1" stroke-dasharray="3 3"/><line x1="517.5" y1="267" x2="517.5" y2="324" stroke="#68727c" stroke-width="1" stroke-dasharray="3 3"/><line x1="600.5" y1="267" x2="600.5" y2="324" stroke="#68727c" stroke-width="1" stroke-dasharray="3 3"/><line x1="766.5" y1="267" x2="766.5" y2="324" stroke="#68727c" stroke-width="1" stroke-dasharray="3 3"/><line x1="882.5" y1="267" x2="882.5" y2="324" stroke="#68727c" stroke-width="1" stroke-dasharray="3 3"/><line x1="268.5" y1="267" x2="268.5" y2="324" stroke="#8a96a2" stroke-width="1"/><line x1="683.5" y1="267" x2="683.5" y2="324" stroke="#8a96a2" stroke-width="1"/><line x1="17" y1="296.5" x2="889" y2="296.5" stroke="#68727c" stroke-width="1" stroke-dasharray="3 3"/><path d="M17.5,296V291.1M20.3,296V291.5M23.0,296V291.8M25.8,296V292.2M28.6,296V292.6M31.3,296V292.9M34.1,296V293.3M36.9,296V293.5M39.6,296V293.5M42.4,296V293.4M45.2,296V293.3M47.9,296V293.3M50.7,296V293.3M53.5,296V293.3M56.2,296V293.4M59.0,296V293.4M61.8,296V293.4M64.5,296V294.3M67.3,296V295.3M72.8,296V297.3M75.6,296V298.1M78.4,296V298.0M81.1,296V298.2M83.9,296V298.8M86.7,296V299.4M89.4,296V299.9M92.2,296V300.3M95.0,296V299.3M97.7,296V297.4M106.0,296V295.3M108.8,296V294.9M111.6,296V294.4M114.3,296V294.0M117.1,296V293.7M119.9,296V293.4M122.6,296V293.4M125.4,296V294.9M130.9,296V297.3M133.7,296V297.6M136.5,296V297.9M139.2,296V298.5M142.0,296V299.3M144.8,296V300.0M147.5,296V300.4M150.3,296V300.5M153.1,296V300.7M155.8,296V300.8M158.6,296V298.1M161.4,296V296.7M166.9,296V294.1M169.7,296V292.7M172.5,296V291.6M175.2,296V291.1M178.0,296V291.3M180.8,296V291.5M183.5,296V291.6M186.3,296V291.8M189.1,296V292.0M191.8,296V292.2M194.6,296V292.3M197.4,296V292.3M200.1,296V292.4M202.9,296V292.5M205.7,296V292.5M208.4,296V292.6M211.2,296V292.7M214.0,296V292.7M216.7,296V292.9M219.5,296V293.1M222.3,296V293.2M225.0,296V294.0M227.8,296V295.2M238.9,296V296.6M241.6,296V296.9M244.4,296V297.2M247.2,296V300.7M249.9,296V304.1M252.7,296V307.5M255.5,296V311.0M258.2,296V313.0M261.0,296V311.6M263.8,296V310.3M266.5,296V309.0M269.3,296V307.9M272.1,296V307.2M274.8,296V306.5M277.6,296V305.7M280.4,296V305.0M283.1,296V304.5M285.9,296V304.7M288.7,296V305.0M291.4,296V303.8M294.2,296V301.3M297.0,296V298.8M305.3,296V295.1M308.0,296V294.7M310.8,296V294.2M313.6,296V293.7M316.3,296V293.4M319.1,296V293.5M321.9,296V293.6M324.6,296V293.7M327.4,296V293.8M330.2,296V295.1M332.9,296V297.2M335.7,296V298.6M338.5,296V299.5M341.2,296V300.5M344.0,296V301.4M346.8,296V302.4M349.5,296V301.9M352.3,296V301.3M355.1,296V300.9M357.8,296V300.5M360.6,296V300.1M363.4,296V299.7M366.1,296V299.3M368.9,296V298.1M371.7,296V296.7M380.0,296V294.8M382.7,296V294.2M385.5,296V293.6M388.3,296V293.4M391.0,296V293.2M393.8,296V293.0M396.6,296V292.8M399.3,296V292.6M402.1,296V292.4M404.9,296V292.1M407.6,296V291.6M410.4,296V291.1M413.2,296V290.5M415.9,296V290.0M418.7,296V289.8M421.5,296V292.6M427.0,296V297.0M429.8,296V298.0M432.5,296V299.1M435.3,296V299.1M438.1,296V299.1M440.9,296V299.0M443.6,296V299.0M446.4,296V299.5M449.2,296V300.0M451.9,296V300.6M454.7,296V301.1M457.5,296V301.6M460.2,296V301.1M463.0,296V300.0M465.8,296V299.1M468.5,296V298.3M471.3,296V297.5M474.1,296V296.7M479.6,296V294.4M482.4,296V293.8M485.1,296V293.2M487.9,296V292.6M490.7,296V292.0M493.4,296V291.9M496.2,296V293.1M499.0,296V294.1M501.7,296V294.9M510.0,296V298.0M512.8,296V299.5M515.6,296V300.6M518.3,296V301.7M521.1,296V301.4M523.9,296V300.9M526.6,296V300.3M529.4,296V300.0M532.2,296V299.6M534.9,296V299.4M537.7,296V299.4M540.5,296V299.5M543.2,296V299.6M546.0,296V299.7M548.8,296V300.1M551.5,296V300.9M554.3,296V301.7M557.1,296V302.5M559.8,296V303.2M562.6,296V302.6M565.4,296V301.5M568.1,296V300.5M570.9,296V299.4M573.7,296V298.4M576.4,296V297.1M582.0,296V294.6M584.7,296V293.4M587.5,296V292.2M590.3,296V291.0M593.0,296V290.2M595.8,296V289.4M598.6,296V288.9M601.3,296V289.1M604.1,296V289.2M606.9,296V289.3M609.6,296V290.2M612.4,296V291.8M615.2,296V292.9M617.9,296V293.6M620.7,296V294.4M626.2,296V296.7M629.0,296V297.2M631.8,296V297.8M634.5,296V298.4M637.3,296V298.0M640.1,296V297.6M642.8,296V297.2M645.6,296V296.7M653.9,296V295.2M656.7,296V294.7M659.4,296V294.4M662.2,296V294.1M665.0,296V293.8M667.7,296V293.5M670.5,296V292.9M673.3,296V293.2M676.0,296V293.6M678.8,296V294.0M681.6,296V294.4M684.3,296V294.8M687.1,296V295.3M689.9,296V295.3M692.6,296V294.7M695.4,296V294.0M698.2,296V293.4M700.9,296V292.7M703.7,296V293.8M709.3,296V297.0M712.0,296V297.9M714.8,296V298.7M717.6,296V299.6M720.3,296V300.5M723.1,296V302.3M725.9,296V303.1M728.6,296V303.9M731.4,296V304.2M734.2,296V303.2M736.9,296V302.5M739.7,296V302.3M742.5,296V302.1M745.2,296V301.8M748.0,296V301.3M750.8,296V300.6M753.5,296V300.2M756.3,296V300.0M759.1,296V299.7M761.8,296V299.4M764.6,296V299.1M767.4,296V298.8M770.1,296V298.4M772.9,296V296.9M784.0,296V295.4M786.7,296V295.0M789.5,296V294.7M792.3,296V294.4M795.0,296V294.3M797.8,296V294.4M800.6,296V294.4M803.3,296V294.4M806.1,296V294.4M808.9,296V294.4M811.6,296V294.4M814.4,296V294.2M817.2,296V294.6M819.9,296V294.9M822.7,296V295.3" stroke="#b82222" stroke-width="1.8" fill="none"/><path d="M16.5,290.6 C19.8,290.2 28.4,290.3 36.0,288.0 C43.6,285.7 54.6,278.1 62.0,277.0 C69.4,275.9 75.1,279.7 80.3,281.5 C85.5,283.3 88.9,287.8 93.3,288.0 C97.7,288.2 101.6,284.5 106.4,282.8 C111.2,281.1 116.8,277.6 122.0,277.6 C127.2,277.6 132.0,280.4 137.6,282.8 C143.2,285.2 149.7,292.5 155.8,292.0 C161.9,291.5 167.9,282.8 174.0,280.0 C180.1,277.2 184.1,277.2 192.3,275.5 C200.6,273.8 214.8,269.8 223.5,269.5 C232.2,269.2 238.8,268.0 244.4,273.7 C250.1,279.4 253.5,297.8 257.4,303.7 C261.3,309.6 263.9,307.4 267.8,308.9 C271.7,310.4 277.1,311.5 280.8,312.8 C284.5,314.1 286.8,317.1 290.0,316.7 C293.2,316.3 295.7,312.5 300.0,310.2 C304.3,307.9 310.8,304.4 315.6,303.0 C320.4,301.6 323.4,299.8 328.6,301.6 C333.8,303.4 340.4,311.6 346.9,314.0 C353.4,316.4 361.2,317.7 367.7,316.2 C374.2,314.7 379.9,308.6 386.0,305.0 C392.1,301.4 398.6,298.1 404.0,294.6 C409.4,291.1 413.7,284.5 418.5,284.1 C423.3,283.7 428.7,290.5 432.8,292.0 C436.9,293.5 438.9,291.5 443.2,293.2 C447.5,295.0 453.3,301.5 458.9,302.4 C464.5,303.3 471.4,300.4 477.0,298.5 C482.6,296.6 487.5,291.8 492.7,291.2 C497.9,290.6 504.0,292.6 508.3,294.6 C512.6,296.6 514.4,301.1 518.8,303.0 C523.1,304.9 529.6,304.6 534.4,305.8 C539.2,306.9 543.1,307.7 547.4,310.2 C551.7,312.7 556.1,318.7 560.4,320.6 C564.7,322.6 568.5,323.6 573.4,321.9 C578.3,320.2 585.9,313.3 590.0,310.2 C594.1,307.1 594.8,305.2 597.8,303.0 C600.8,300.8 604.3,298.2 608.2,297.2 C612.1,296.2 616.7,296.3 621.2,297.2 C625.8,298.1 630.4,302.4 635.6,302.4 C640.8,302.4 646.6,299.5 652.5,297.2 C658.4,294.9 664.6,290.4 670.7,288.8 C676.8,287.2 683.8,288.7 689.0,287.5 C694.2,286.3 696.8,280.8 702.0,281.5 C707.2,282.2 715.4,288.5 720.2,292.0 C725.0,295.5 726.3,299.8 730.6,302.4 C734.9,305.0 739.7,306.2 746.2,307.6 C752.8,309.0 762.7,311.6 769.7,311.0 C776.7,310.4 780.6,306.4 788.0,303.7 C795.4,301.0 807.9,296.3 814.0,294.6 C820.1,292.9 820.1,293.5 824.4,293.2 C828.7,293.0 837.4,293.2 840.0,293.2" stroke="#14147a" stroke-width="1.2" fill="none"/><path d="M16.5,295.9 C19.8,295.0 30.6,292.4 36.0,290.6 C41.4,288.9 44.7,287.2 49.0,285.4 C53.3,283.6 57.7,280.9 62.0,279.7 C66.3,278.5 70.7,277.7 75.0,278.0 C79.3,278.3 84.1,280.3 88.0,281.5 C91.9,282.7 94.2,284.9 98.5,285.0 C102.8,285.1 108.8,283.3 114.0,282.3 C119.2,281.3 124.8,279.0 130.0,279.0 C135.2,279.0 140.7,280.8 145.4,282.3 C150.1,283.8 154.1,287.4 158.4,288.0 C162.8,288.6 165.8,287.4 171.5,286.0 C177.2,284.6 185.4,281.3 192.3,279.5 C199.2,277.7 206.9,276.4 213.0,275.0 C219.1,273.6 223.6,271.4 228.8,271.0 C234.0,270.6 240.1,270.4 244.4,272.4 C248.7,274.4 250.9,278.9 254.8,282.8 C258.7,286.7 263.0,292.2 267.8,295.9 C272.6,299.6 278.0,302.6 283.4,305.0 C288.8,307.4 294.6,310.1 300.0,310.2 C305.4,310.3 310.0,306.9 315.6,305.8 C321.2,304.6 327.8,302.6 333.9,303.1 C340.0,303.6 345.9,307.1 352.0,308.9 C358.1,310.6 364.6,313.8 370.3,313.6 C376.0,313.4 380.4,310.1 386.0,307.6 C391.6,305.1 397.5,301.9 404.0,298.5 C410.5,295.1 418.5,288.9 425.0,287.5 C431.5,286.1 436.9,288.5 443.0,290.1 C449.1,291.7 455.4,295.7 461.5,297.2 C467.6,298.7 473.6,299.4 479.7,299.0 C485.8,298.6 492.8,295.5 498.0,294.6 C503.2,293.7 506.2,292.9 511.0,293.8 C515.8,294.7 520.5,297.7 526.6,299.8 C532.7,301.9 539.6,303.1 547.4,306.3 C555.2,309.6 566.3,317.8 573.4,319.3 C580.5,320.8 585.5,317.1 590.0,315.4 C594.5,313.7 596.5,311.3 600.4,308.9 C604.3,306.5 609.5,302.8 613.4,301.0 C617.3,299.2 620.0,298.2 623.9,298.0 C627.8,297.8 631.7,299.9 636.9,299.8 C642.1,299.7 649.8,298.4 655.0,297.2 C660.2,296.0 662.3,294.2 668.0,292.7 C673.7,291.2 682.5,289.4 689.0,288.0 C695.5,286.6 701.6,284.1 707.2,284.1 C712.8,284.1 718.0,285.8 722.8,288.0 C727.6,290.2 731.0,294.6 735.8,297.2 C740.6,299.8 745.4,301.8 751.5,303.7 C757.6,305.6 765.4,308.9 772.3,308.9 C779.2,308.9 786.5,305.6 793.0,303.7 C799.5,301.8 806.2,298.8 811.4,297.2 C816.6,295.6 819.6,294.5 824.4,293.8 C829.2,293.1 837.4,293.3 840.0,293.2" stroke="#d81a1a" stroke-width="3.4" fill="none" stroke-linejoin="round"/><path d="M16.5,295.9 C19.8,295.0 30.6,292.4 36.0,290.6 C41.4,288.9 44.7,287.2 49.0,285.4 C53.3,283.6 57.7,280.9 62.0,279.7 C66.3,278.5 70.7,277.7 75.0,278.0 C79.3,278.3 84.1,280.3 88.0,281.5 C91.9,282.7 94.2,284.9 98.5,285.0 C102.8,285.1 108.8,283.3 114.0,282.3 C119.2,281.3 124.8,279.0 130.0,279.0 C135.2,279.0 140.7,280.8 145.4,282.3 C150.1,283.8 154.1,287.4 158.4,288.0 C162.8,288.6 165.8,287.4 171.5,286.0 C177.2,284.6 185.4,281.3 192.3,279.5 C199.2,277.7 206.9,276.4 213.0,275.0 C219.1,273.6 223.6,271.4 228.8,271.0 C234.0,270.6 240.1,270.4 244.4,272.4 C248.7,274.4 250.9,278.9 254.8,282.8 C258.7,286.7 263.0,292.2 267.8,295.9 C272.6,299.6 278.0,302.6 283.4,305.0 C288.8,307.4 294.6,310.1 300.0,310.2 C305.4,310.3 310.0,306.9 315.6,305.8 C321.2,304.6 327.8,302.6 333.9,303.1 C340.0,303.6 345.9,307.1 352.0,308.9 C358.1,310.6 364.6,313.8 370.3,313.6 C376.0,313.4 380.4,310.1 386.0,307.6 C391.6,305.1 397.5,301.9 404.0,298.5 C410.5,295.1 418.5,288.9 425.0,287.5 C431.5,286.1 436.9,288.5 443.0,290.1 C449.1,291.7 455.4,295.7 461.5,297.2 C467.6,298.7 473.6,299.4 479.7,299.0 C485.8,298.6 492.8,295.5 498.0,294.6 C503.2,293.7 506.2,292.9 511.0,293.8 C515.8,294.7 520.5,297.7 526.6,299.8 C532.7,301.9 539.6,303.1 547.4,306.3 C555.2,309.6 566.3,317.8 573.4,319.3 C580.5,320.8 585.5,317.1 590.0,315.4 C594.5,313.7 596.5,311.3 600.4,308.9 C604.3,306.5 609.5,302.8 613.4,301.0 C617.3,299.2 620.0,298.2 623.9,298.0 C627.8,297.8 631.7,299.9 636.9,299.8 C642.1,299.7 649.8,298.4 655.0,297.2 C660.2,296.0 662.3,294.2 668.0,292.7 C673.7,291.2 682.5,289.4 689.0,288.0 C695.5,286.6 701.6,284.1 707.2,284.1 C712.8,284.1 718.0,285.8 722.8,288.0 C727.6,290.2 731.0,294.6 735.8,297.2 C740.6,299.8 745.4,301.8 751.5,303.7 C757.6,305.6 765.4,308.9 772.3,308.9 C779.2,308.9 786.5,305.6 793.0,303.7 C799.5,301.8 806.2,298.8 811.4,297.2 C816.6,295.6 819.6,294.5 824.4,293.8 C829.2,293.1 837.4,293.3 840.0,293.2" stroke="#ff4a4a" stroke-width="1.4" fill="none" stroke-linecap="round" stroke-dasharray="0.01 2.77" opacity="0.8" /><rect x="16.5" y="266.5" width="873" height="58" fill="none" stroke="#a9b9c9" stroke-width="1.2"/><text x="18" y="278" font-size="10" fill="#1a1a90">MACD</text><line x1="889" y1="296.5" x2="893" y2="296.5" stroke="#a9b9c9" stroke-width="1"/><text x="897" y="303" font-size="10.8" fill="#ffffff">-0.00</text><defs><linearGradient id="rg" gradientUnits="userSpaceOnUse" x1="0" y1="344.7" x2="0" y2="396"><stop offset="0" stop-color="#573a1c" stop-opacity="1"/><stop offset="0.45" stop-color="#503a24" stop-opacity="0.9"/><stop offset="1" stop-color="#3a4149" stop-opacity="0"/></linearGradient><clipPath id="cfill"><rect x="0" y="344.7" width="1152" height="60"/></clipPath></defs><path d="M16.5,354.0 L21.7,358.0 L27.7,367.6 L30.8,358.0 L34.7,353.7 L38.6,351.4 L42.5,350.3 L46.5,348.8 L51.7,343.6 L55.0,340.5 L58.2,338.4 L62.0,345.7 L67.3,348.8 L72.5,348.3 L75.1,356.6 L79.0,359.0 L83.0,360.6 L87.5,366.3 L92.0,371.0 L95.9,360.8 L99.8,354.0 L103.1,349.5 L106.4,348.8 L110.3,348.2 L114.2,345.0 L118.1,342.7 L122.0,342.3 L125.9,347.1 L129.8,354.0 L133.7,361.9 L137.6,365.8 L141.5,369.6 L145.4,373.6 L149.3,372.3 L153.2,368.4 L155.8,373.6 L160.0,352.0 L163.5,350.2 L167.0,348.5 L171.6,352.0 L177.4,342.7 L180.8,342.2 L182.6,350.8 L185.5,345.0 L191.2,355.5 L196.5,343.3 L199.4,348.5 L205.1,345.0 L211.0,347.4 L214.4,343.9 L219.1,339.5 L223.7,334.0 L226.0,343.9 L229.4,356.6 L232.9,350.8 L236.4,347.1 L239.9,346.2 L244.5,356.6 L249.1,379.8 L252.6,384.9 L256.0,389.0 L259.3,390.6 L262.6,389.2 L269.0,377.5 L275.0,384.0 L278.5,384.6 L282.0,385.0 L286.0,383.5 L290.0,380.0 L293.9,373.6 L297.8,369.7 L302.4,371.0 L306.9,371.0 L312.0,366.5 L317.3,374.4 L322.5,373.6 L326.4,376.2 L329.0,360.6 L332.9,380.0 L338.0,384.0 L342.0,385.5 L346.0,390.5 L349.8,381.4 L353.8,386.6 L359.0,386.6 L362.9,386.3 L366.8,384.0 L370.1,375.3 L373.3,365.8 L376.6,366.3 L379.8,368.4 L385.0,365.8 L389.0,371.0 L395.4,364.5 L398.0,358.7 L401.9,355.8 L405.8,356.6 L409.3,355.0 L412.8,350.4 L416.2,347.5 L418.9,346.8 L422.8,361.1 L426.7,373.6 L431.9,368.4 L435.8,368.0 L439.7,364.5 L444.9,376.2 L450.0,377.5 L453.3,382.9 L456.6,386.6 L460.5,372.3 L464.4,373.0 L468.2,369.9 L472.1,370.6 L476.0,368.4 L477.4,374.9 L482.7,355.3 L485.9,356.4 L489.2,358.0 L493.1,363.0 L497.0,364.5 L500.9,368.4 L506.0,360.6 L510.0,374.9 L513.9,381.6 L517.8,385.3 L523.0,376.2 L526.9,373.9 L530.8,374.9 L536.0,380.0 L540.0,385.7 L543.2,387.3 L546.5,391.8 L547.6,393.3 L552.2,396.0 L556.7,401.0 L561.3,393.3 L564.3,396.4 L568.9,392.4 L571.9,394.2 L576.5,381.2 L582.5,375.1 L588.6,369.0 L594.7,363.0 L599.3,367.5 L603.8,366.9 L608.4,354.7 L612.9,369.0 L619.0,366.9 L623.5,376.7 L628.1,382.7 L632.7,373.6 L638.8,366.0 L644.8,360.0 L649.4,364.2 L654.0,369.0 L657.5,364.7 L661.1,358.7 L664.6,354.7 L669.2,355.0 L673.7,355.3 L677.5,357.9 L681.3,361.4 L685.1,357.8 L688.9,355.3 L693.4,343.2 L698.0,343.2 L702.6,342.6 L707.1,364.5 L713.2,372.0 L717.8,372.3 L722.3,372.0 L725.4,382.7 L730.0,385.1 L734.5,384.2 L740.5,378.1 L746.6,385.7 L752.7,382.7 L757.2,384.2 L761.8,384.2 L767.9,388.8 L774.0,367.5 L778.5,371.0 L783.1,371.1 L789.2,367.5 L793.8,367.4 L798.3,364.5 L802.1,363.4 L805.9,358.4 L808.9,367.5 L810.4,360.0 L816.5,363.0 L819.6,366.0 L824.1,363.9 L827.9,364.6 L831.7,363.9 L837.8,369.9 L837.8,396 L16.5,396 Z" fill="url(#rg)" clip-path="url(#cfill)"/><line x1="19.5" y1="332" x2="19.5" y2="404" stroke="#68727c" stroke-width="1" stroke-dasharray="3 3"/><line x1="102.5" y1="332" x2="102.5" y2="404" stroke="#68727c" stroke-width="1" stroke-dasharray="3 3"/><line x1="185.5" y1="332" x2="185.5" y2="404" stroke="#68727c" stroke-width="1" stroke-dasharray="3 3"/><line x1="351.5" y1="332" x2="351.5" y2="404" stroke="#68727c" stroke-width="1" stroke-dasharray="3 3"/><line x1="434.5" y1="332" x2="434.5" y2="404" stroke="#68727c" stroke-width="1" stroke-dasharray="3 3"/><line x1="517.5" y1="332" x2="517.5" y2="404" stroke="#68727c" stroke-width="1" stroke-dasharray="3 3"/><line x1="600.5" y1="332" x2="600.5" y2="404" stroke="#68727c" stroke-width="1" stroke-dasharray="3 3"/><line x1="766.5" y1="332" x2="766.5" y2="404" stroke="#68727c" stroke-width="1" stroke-dasharray="3 3"/><line x1="882.5" y1="332" x2="882.5" y2="404" stroke="#68727c" stroke-width="1" stroke-dasharray="3 3"/><line x1="268.5" y1="332" x2="268.5" y2="404" stroke="#8a96a2" stroke-width="1"/><line x1="683.5" y1="332" x2="683.5" y2="404" stroke="#8a96a2" stroke-width="1"/><line x1="17" y1="368.5" x2="889" y2="368.5" stroke="#68727c" stroke-width="1" stroke-dasharray="3 3"/><line x1="34" y1="344.7" x2="838" y2="344.7" stroke="#1818aa" stroke-width="1.9"/><line x1="17" y1="392.5" x2="838" y2="392.5" stroke="#1818aa" stroke-width="1.9"/><clipPath id="cmid"><rect x="0" y="344.7" width="1152" height="47.8"/></clipPath><clipPath id="ctop"><rect x="0" y="0" width="1152" height="344.7"/></clipPath><clipPath id="cbot"><rect x="0" y="392.5" width="1152" height="50"/></clipPath><path d="M16.5,354.0 L21.7,358.0 L27.7,367.6 L30.8,358.0 L34.7,353.7 L38.6,351.4 L42.5,350.3 L46.5,348.8 L51.7,343.6 L55.0,340.5 L58.2,338.4 L62.0,345.7 L67.3,348.8 L72.5,348.3 L75.1,356.6 L79.0,359.0 L83.0,360.6 L87.5,366.3 L92.0,371.0 L95.9,360.8 L99.8,354.0 L103.1,349.5 L106.4,348.8 L110.3,348.2 L114.2,345.0 L118.1,342.7 L122.0,342.3 L125.9,347.1 L129.8,354.0 L133.7,361.9 L137.6,365.8 L141.5,369.6 L145.4,373.6 L149.3,372.3 L153.2,368.4 L155.8,373.6 L160.0,352.0 L163.5,350.2 L167.0,348.5 L171.6,352.0 L177.4,342.7 L180.8,342.2 L182.6,350.8 L185.5,345.0 L191.2,355.5 L196.5,343.3 L199.4,348.5 L205.1,345.0 L211.0,347.4 L214.4,343.9 L219.1,339.5 L223.7,334.0 L226.0,343.9 L229.4,356.6 L232.9,350.8 L236.4,347.1 L239.9,346.2 L244.5,356.6 L249.1,379.8 L252.6,384.9 L256.0,389.0 L259.3,390.6 L262.6,389.2 L269.0,377.5 L275.0,384.0 L278.5,384.6 L282.0,385.0 L286.0,383.5 L290.0,380.0 L293.9,373.6 L297.8,369.7 L302.4,371.0 L306.9,371.0 L312.0,366.5 L317.3,374.4 L322.5,373.6 L326.4,376.2 L329.0,360.6 L332.9,380.0 L338.0,384.0 L342.0,385.5 L346.0,390.5 L349.8,381.4 L353.8,386.6 L359.0,386.6 L362.9,386.3 L366.8,384.0 L370.1,375.3 L373.3,365.8 L376.6,366.3 L379.8,368.4 L385.0,365.8 L389.0,371.0 L395.4,364.5 L398.0,358.7 L401.9,355.8 L405.8,356.6 L409.3,355.0 L412.8,350.4 L416.2,347.5 L418.9,346.8 L422.8,361.1 L426.7,373.6 L431.9,368.4 L435.8,368.0 L439.7,364.5 L444.9,376.2 L450.0,377.5 L453.3,382.9 L456.6,386.6 L460.5,372.3 L464.4,373.0 L468.2,369.9 L472.1,370.6 L476.0,368.4 L477.4,374.9 L482.7,355.3 L485.9,356.4 L489.2,358.0 L493.1,363.0 L497.0,364.5 L500.9,368.4 L506.0,360.6 L510.0,374.9 L513.9,381.6 L517.8,385.3 L523.0,376.2 L526.9,373.9 L530.8,374.9 L536.0,380.0 L540.0,385.7 L543.2,387.3 L546.5,391.8 L547.6,393.3 L552.2,396.0 L556.7,401.0 L561.3,393.3 L564.3,396.4 L568.9,392.4 L571.9,394.2 L576.5,381.2 L582.5,375.1 L588.6,369.0 L594.7,363.0 L599.3,367.5 L603.8,366.9 L608.4,354.7 L612.9,369.0 L619.0,366.9 L623.5,376.7 L628.1,382.7 L632.7,373.6 L638.8,366.0 L644.8,360.0 L649.4,364.2 L654.0,369.0 L657.5,364.7 L661.1,358.7 L664.6,354.7 L669.2,355.0 L673.7,355.3 L677.5,357.9 L681.3,361.4 L685.1,357.8 L688.9,355.3 L693.4,343.2 L698.0,343.2 L702.6,342.6 L707.1,364.5 L713.2,372.0 L717.8,372.3 L722.3,372.0 L725.4,382.7 L730.0,385.1 L734.5,384.2 L740.5,378.1 L746.6,385.7 L752.7,382.7 L757.2,384.2 L761.8,384.2 L767.9,388.8 L774.0,367.5 L778.5,371.0 L783.1,371.1 L789.2,367.5 L793.8,367.4 L798.3,364.5 L802.1,363.4 L805.9,358.4 L808.9,367.5 L810.4,360.0 L816.5,363.0 L819.6,366.0 L824.1,363.9 L827.9,364.6 L831.7,363.9 L837.8,369.9" stroke="#f0902c" stroke-width="1" fill="none" clip-path="url(#cmid)"/><path d="M16.5,354.0 L21.7,358.0 L27.7,367.6 L30.8,358.0 L34.7,353.7 L38.6,351.4 L42.5,350.3 L46.5,348.8 L51.7,343.6 L55.0,340.5 L58.2,338.4 L62.0,345.7 L67.3,348.8 L72.5,348.3 L75.1,356.6 L79.0,359.0 L83.0,360.6 L87.5,366.3 L92.0,371.0 L95.9,360.8 L99.8,354.0 L103.1,349.5 L106.4,348.8 L110.3,348.2 L114.2,345.0 L118.1,342.7 L122.0,342.3 L125.9,347.1 L129.8,354.0 L133.7,361.9 L137.6,365.8 L141.5,369.6 L145.4,373.6 L149.3,372.3 L153.2,368.4 L155.8,373.6 L160.0,352.0 L163.5,350.2 L167.0,348.5 L171.6,352.0 L177.4,342.7 L180.8,342.2 L182.6,350.8 L185.5,345.0 L191.2,355.5 L196.5,343.3 L199.4,348.5 L205.1,345.0 L211.0,347.4 L214.4,343.9 L219.1,339.5 L223.7,334.0 L226.0,343.9 L229.4,356.6 L232.9,350.8 L236.4,347.1 L239.9,346.2 L244.5,356.6 L249.1,379.8 L252.6,384.9 L256.0,389.0 L259.3,390.6 L262.6,389.2 L269.0,377.5 L275.0,384.0 L278.5,384.6 L282.0,385.0 L286.0,383.5 L290.0,380.0 L293.9,373.6 L297.8,369.7 L302.4,371.0 L306.9,371.0 L312.0,366.5 L317.3,374.4 L322.5,373.6 L326.4,376.2 L329.0,360.6 L332.9,380.0 L338.0,384.0 L342.0,385.5 L346.0,390.5 L349.8,381.4 L353.8,386.6 L359.0,386.6 L362.9,386.3 L366.8,384.0 L370.1,375.3 L373.3,365.8 L376.6,366.3 L379.8,368.4 L385.0,365.8 L389.0,371.0 L395.4,364.5 L398.0,358.7 L401.9,355.8 L405.8,356.6 L409.3,355.0 L412.8,350.4 L416.2,347.5 L418.9,346.8 L422.8,361.1 L426.7,373.6 L431.9,368.4 L435.8,368.0 L439.7,364.5 L444.9,376.2 L450.0,377.5 L453.3,382.9 L456.6,386.6 L460.5,372.3 L464.4,373.0 L468.2,369.9 L472.1,370.6 L476.0,368.4 L477.4,374.9 L482.7,355.3 L485.9,356.4 L489.2,358.0 L493.1,363.0 L497.0,364.5 L500.9,368.4 L506.0,360.6 L510.0,374.9 L513.9,381.6 L517.8,385.3 L523.0,376.2 L526.9,373.9 L530.8,374.9 L536.0,380.0 L540.0,385.7 L543.2,387.3 L546.5,391.8 L547.6,393.3 L552.2,396.0 L556.7,401.0 L561.3,393.3 L564.3,396.4 L568.9,392.4 L571.9,394.2 L576.5,381.2 L582.5,375.1 L588.6,369.0 L594.7,363.0 L599.3,367.5 L603.8,366.9 L608.4,354.7 L612.9,369.0 L619.0,366.9 L623.5,376.7 L628.1,382.7 L632.7,373.6 L638.8,366.0 L644.8,360.0 L649.4,364.2 L654.0,369.0 L657.5,364.7 L661.1,358.7 L664.6,354.7 L669.2,355.0 L673.7,355.3 L677.5,357.9 L681.3,361.4 L685.1,357.8 L688.9,355.3 L693.4,343.2 L698.0,343.2 L702.6,342.6 L707.1,364.5 L713.2,372.0 L717.8,372.3 L722.3,372.0 L725.4,382.7 L730.0,385.1 L734.5,384.2 L740.5,378.1 L746.6,385.7 L752.7,382.7 L757.2,384.2 L761.8,384.2 L767.9,388.8 L774.0,367.5 L778.5,371.0 L783.1,371.1 L789.2,367.5 L793.8,367.4 L798.3,364.5 L802.1,363.4 L805.9,358.4 L808.9,367.5 L810.4,360.0 L816.5,363.0 L819.6,366.0 L824.1,363.9 L827.9,364.6 L831.7,363.9 L837.8,369.9" stroke="#b83ee0" stroke-width="1" fill="none" clip-path="url(#ctop)"/><path d="M16.5,354.0 L21.7,358.0 L27.7,367.6 L30.8,358.0 L34.7,353.7 L38.6,351.4 L42.5,350.3 L46.5,348.8 L51.7,343.6 L55.0,340.5 L58.2,338.4 L62.0,345.7 L67.3,348.8 L72.5,348.3 L75.1,356.6 L79.0,359.0 L83.0,360.6 L87.5,366.3 L92.0,371.0 L95.9,360.8 L99.8,354.0 L103.1,349.5 L106.4,348.8 L110.3,348.2 L114.2,345.0 L118.1,342.7 L122.0,342.3 L125.9,347.1 L129.8,354.0 L133.7,361.9 L137.6,365.8 L141.5,369.6 L145.4,373.6 L149.3,372.3 L153.2,368.4 L155.8,373.6 L160.0,352.0 L163.5,350.2 L167.0,348.5 L171.6,352.0 L177.4,342.7 L180.8,342.2 L182.6,350.8 L185.5,345.0 L191.2,355.5 L196.5,343.3 L199.4,348.5 L205.1,345.0 L211.0,347.4 L214.4,343.9 L219.1,339.5 L223.7,334.0 L226.0,343.9 L229.4,356.6 L232.9,350.8 L236.4,347.1 L239.9,346.2 L244.5,356.6 L249.1,379.8 L252.6,384.9 L256.0,389.0 L259.3,390.6 L262.6,389.2 L269.0,377.5 L275.0,384.0 L278.5,384.6 L282.0,385.0 L286.0,383.5 L290.0,380.0 L293.9,373.6 L297.8,369.7 L302.4,371.0 L306.9,371.0 L312.0,366.5 L317.3,374.4 L322.5,373.6 L326.4,376.2 L329.0,360.6 L332.9,380.0 L338.0,384.0 L342.0,385.5 L346.0,390.5 L349.8,381.4 L353.8,386.6 L359.0,386.6 L362.9,386.3 L366.8,384.0 L370.1,375.3 L373.3,365.8 L376.6,366.3 L379.8,368.4 L385.0,365.8 L389.0,371.0 L395.4,364.5 L398.0,358.7 L401.9,355.8 L405.8,356.6 L409.3,355.0 L412.8,350.4 L416.2,347.5 L418.9,346.8 L422.8,361.1 L426.7,373.6 L431.9,368.4 L435.8,368.0 L439.7,364.5 L444.9,376.2 L450.0,377.5 L453.3,382.9 L456.6,386.6 L460.5,372.3 L464.4,373.0 L468.2,369.9 L472.1,370.6 L476.0,368.4 L477.4,374.9 L482.7,355.3 L485.9,356.4 L489.2,358.0 L493.1,363.0 L497.0,364.5 L500.9,368.4 L506.0,360.6 L510.0,374.9 L513.9,381.6 L517.8,385.3 L523.0,376.2 L526.9,373.9 L530.8,374.9 L536.0,380.0 L540.0,385.7 L543.2,387.3 L546.5,391.8 L547.6,393.3 L552.2,396.0 L556.7,401.0 L561.3,393.3 L564.3,396.4 L568.9,392.4 L571.9,394.2 L576.5,381.2 L582.5,375.1 L588.6,369.0 L594.7,363.0 L599.3,367.5 L603.8,366.9 L608.4,354.7 L612.9,369.0 L619.0,366.9 L623.5,376.7 L628.1,382.7 L632.7,373.6 L638.8,366.0 L644.8,360.0 L649.4,364.2 L654.0,369.0 L657.5,364.7 L661.1,358.7 L664.6,354.7 L669.2,355.0 L673.7,355.3 L677.5,357.9 L681.3,361.4 L685.1,357.8 L688.9,355.3 L693.4,343.2 L698.0,343.2 L702.6,342.6 L707.1,364.5 L713.2,372.0 L717.8,372.3 L722.3,372.0 L725.4,382.7 L730.0,385.1 L734.5,384.2 L740.5,378.1 L746.6,385.7 L752.7,382.7 L757.2,384.2 L761.8,384.2 L767.9,388.8 L774.0,367.5 L778.5,371.0 L783.1,371.1 L789.2,367.5 L793.8,367.4 L798.3,364.5 L802.1,363.4 L805.9,358.4 L808.9,367.5 L810.4,360.0 L816.5,363.0 L819.6,366.0 L824.1,363.9 L827.9,364.6 L831.7,363.9 L837.8,369.9" stroke="#30d030" stroke-width="1" fill="none" clip-path="url(#cbot)"/><rect x="16.5" y="331.5" width="873" height="73" fill="none" stroke="#a9b9c9" stroke-width="1.2"/><text x="18" y="343" font-size="9.8" fill="#e8883a">RSI</text><line x1="889" y1="368.5" x2="893" y2="368.5" stroke="#a9b9c9" stroke-width="1"/><text x="897" y="375" font-size="11" fill="#ffffff">50</text><line x1="18" y1="380" x2="18" y2="408" stroke="#c8e8e0" stroke-width="2"/><path d="M17.5,381.5 H77 Q78.5,381.5 78.5,383.5 V398.5 Q78.5,400.5 77,400.5 H17.5 Z" fill="#5b6b80" stroke="#b8c8d8" stroke-width="1.2"/><text x="24" y="395.5" font-size="11" fill="#f0f4f8">Фев 2021</text><line x1="270" y1="380" x2="270" y2="408" stroke="#c8e8e0" stroke-width="2"/><path d="M269.5,381.5 H330 Q331.5,381.5 331.5,383.5 V398.5 Q331.5,400.5 330,400.5 H269.5 Z" fill="#5b6b80" stroke="#b8c8d8" stroke-width="1.2"/><text x="276" y="395.5" font-size="11" fill="#f0f4f8">Мар 2021</text><line x1="685" y1="380" x2="685" y2="408" stroke="#c8e8e0" stroke-width="2"/><path d="M684.5,381.5 H744 Q745.5,381.5 745.5,383.5 V398.5 Q745.5,400.5 744,400.5 H684.5 Z" fill="#5b6b80" stroke="#b8c8d8" stroke-width="1.2"/><text x="691" y="395.5" font-size="11" fill="#f0f4f8">Апр 2021</text><line x1="19.5" y1="404" x2="19.5" y2="408" stroke="#a9b9c9" stroke-width="1"/><line x1="102.5" y1="404" x2="102.5" y2="408" stroke="#a9b9c9" stroke-width="1"/><line x1="185.5" y1="404" x2="185.5" y2="408" stroke="#a9b9c9" stroke-width="1"/><line x1="268.5" y1="404" x2="268.5" y2="408" stroke="#a9b9c9" stroke-width="1"/><line x1="351.5" y1="404" x2="351.5" y2="408" stroke="#a9b9c9" stroke-width="1"/><line x1="434.5" y1="404" x2="434.5" y2="408" stroke="#a9b9c9" stroke-width="1"/><line x1="517.5" y1="404" x2="517.5" y2="408" stroke="#a9b9c9" stroke-width="1"/><line x1="600.5" y1="404" x2="600.5" y2="408" stroke="#a9b9c9" stroke-width="1"/><line x1="683.5" y1="404" x2="683.5" y2="408" stroke="#a9b9c9" stroke-width="1"/><line x1="766.5" y1="404" x2="766.5" y2="408" stroke="#a9b9c9" stroke-width="1"/><line x1="882.5" y1="404" x2="882.5" y2="408" stroke="#a9b9c9" stroke-width="1"/><text x="18.5" y="427" font-size="11" fill="#ffffff" text-anchor="middle">8</text><text x="102.5" y="427" font-size="11" fill="#ffffff" text-anchor="middle">15</text><text x="185.5" y="427" font-size="11" fill="#ffffff" text-anchor="middle">22</text><text x="268.5" y="427" font-size="11" fill="#ffffff" text-anchor="middle">1</text><text x="351.5" y="427" font-size="11" fill="#ffffff" text-anchor="middle">8</text><text x="434.5" y="427" font-size="11" fill="#ffffff" text-anchor="middle">15</text><text x="517.5" y="427" font-size="11" fill="#ffffff" text-anchor="middle">22</text><text x="600.5" y="427" font-size="11" fill="#ffffff" text-anchor="middle">29</text><text x="683.5" y="427" font-size="11" fill="#ffffff" text-anchor="middle">5</text><text x="766.5" y="427" font-size="11" fill="#ffffff" text-anchor="middle">12</text><text x="882.5" y="427" font-size="11" fill="#ffffff" text-anchor="middle">19</text>
</svg>
</body></html>
